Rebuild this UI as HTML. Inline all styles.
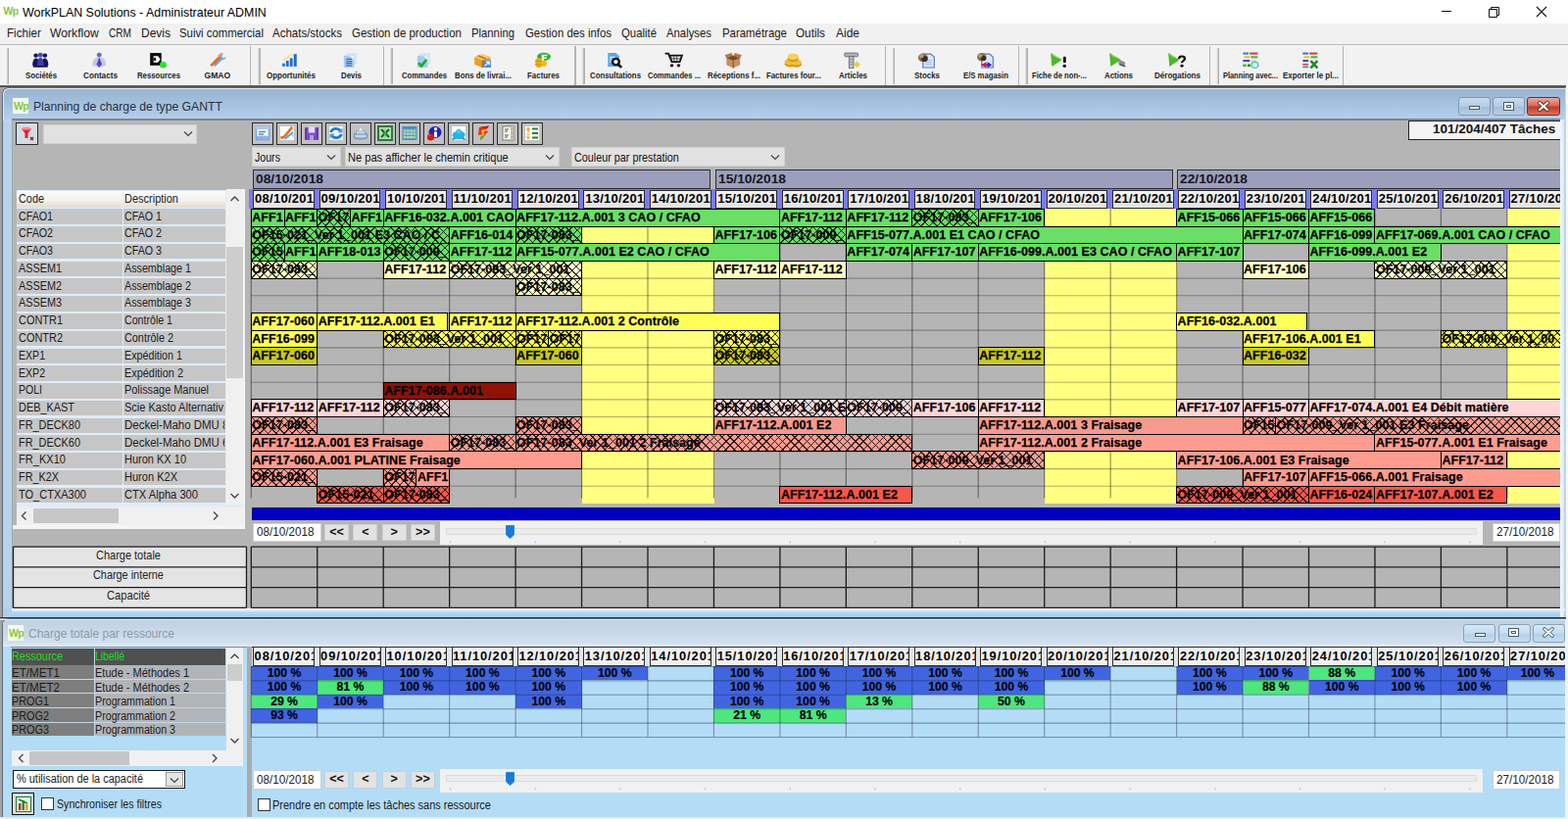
<!DOCTYPE html>
<html lang="fr"><head><meta charset="utf-8"><title>WorkPLAN Solutions - Administrateur ADMIN</title>
<style>

html,body{margin:0;padding:0;background:#fff;overflow:hidden;}
#root{position:relative;width:1600px;height:836px;overflow:hidden;background:#fff;font-family:"Liberation Sans",sans-serif;font-size:12px;color:#000;}
#root div{position:absolute;box-sizing:border-box;white-space:nowrap;}
#root svg{position:absolute;overflow:visible;}
.t{line-height:1;}
.bar{border:1px solid #000;overflow:hidden;font-weight:bold;font-size:12.5px;line-height:12.5px;padding-left:0.500px;padding-top:2.100px;letter-spacing:0.050px;-webkit-text-stroke:0.250px #000;}
.hx{background-image:repeating-linear-gradient(45deg,rgba(0,0,0,.8) 0,rgba(0,0,0,.8) 1.05px,transparent 1.05px,transparent 5.83px),repeating-linear-gradient(-45deg,rgba(0,0,0,.8) 0,rgba(0,0,0,.8) 1.05px,transparent 1.05px,transparent 5.83px);}
.dh{border:1.200px solid #2a2a2a;background:linear-gradient(#f4f4f4,#e2e2e2);font-weight:bold;font-size:13px;line-height:16px;overflow:hidden;padding-left:1px;letter-spacing:0.250px;}
.lc{background:#c6c6c6;font-size:12px;line-height:16px;overflow:hidden;color:#1a1a1a;}
.pc{font-weight:bold;font-size:12.2px;line-height:14.6px;text-align:center;color:#04040c;overflow:hidden;-webkit-text-stroke:0.200px #000;}
.btn{background:#e1e1e1;border:1px solid #adadad;}

</style></head><body>
<div id="root">
<div style="left:0px;top:0px;width:1600px;height:24px;background:#fff;"></div>
<div class="t" style="left:3.5px;top:6px;font-size:10.5px;font-weight:bold;color:#86c83c;letter-spacing:-0.6px;">Wp</div>
<div class="t" style="left:23px;top:5.5px;font-size:13.4px;transform:scaleX(0.927);transform-origin:0 0;">WorkPLAN Solutions - Administrateur ADMIN</div>
<svg style="left:1470px;top:5px" width="120" height="16" viewBox="0 0 120 16"><path d="M1 6.5H11" stroke="#111" stroke-width="1" fill="none"/><path d="M49.5 4.5h8v8h-8z M51.5 4.5v-2h8v8h-2" stroke="#111" stroke-width="1" fill="none"/><path d="M98 2l10 10M108 2l-10 10" stroke="#111" stroke-width="1.1" fill="none"/></svg>
<div style="left:0px;top:24px;width:1600px;height:21px;background:#f1f1f1;"></div>
<div class="t" style="left:7px;top:28px;font-size:12.2px;color:#1a1a1a;transform:scaleX(0.956);transform-origin:0 0;">Fichier</div>
<div class="t" style="left:51px;top:28px;font-size:12.2px;color:#1a1a1a;">Workflow</div>
<div class="t" style="left:111px;top:28px;font-size:12.2px;color:#1a1a1a;transform:scaleX(0.828);transform-origin:0 0;">CRM</div>
<div class="t" style="left:144px;top:28px;font-size:12.2px;color:#1a1a1a;transform:scaleX(0.983);transform-origin:0 0;">Devis</div>
<div class="t" style="left:183px;top:28px;font-size:12.2px;color:#1a1a1a;transform:scaleX(0.933);transform-origin:0 0;">Suivi commercial</div>
<div class="t" style="left:278px;top:28px;font-size:12.2px;color:#1a1a1a;transform:scaleX(0.943);transform-origin:0 0;">Achats/stocks</div>
<div class="t" style="left:359px;top:28px;font-size:12.2px;color:#1a1a1a;transform:scaleX(0.938);transform-origin:0 0;">Gestion de production</div>
<div class="t" style="left:481px;top:28px;font-size:12.2px;color:#1a1a1a;transform:scaleX(0.927);transform-origin:0 0;">Planning</div>
<div class="t" style="left:536px;top:28px;font-size:12.2px;color:#1a1a1a;transform:scaleX(0.934);transform-origin:0 0;">Gestion des infos</div>
<div class="t" style="left:634px;top:28px;font-size:12.2px;color:#1a1a1a;transform:scaleX(0.931);transform-origin:0 0;">Qualité</div>
<div class="t" style="left:680px;top:28px;font-size:12.2px;color:#1a1a1a;transform:scaleX(0.929);transform-origin:0 0;">Analyses</div>
<div class="t" style="left:737px;top:28px;font-size:12.2px;color:#1a1a1a;transform:scaleX(0.936);transform-origin:0 0;">Paramétrage</div>
<div class="t" style="left:812px;top:28px;font-size:12.2px;color:#1a1a1a;transform:scaleX(0.962);transform-origin:0 0;">Outils</div>
<div class="t" style="left:853px;top:28px;font-size:12.2px;color:#1a1a1a;transform:scaleX(0.983);transform-origin:0 0;">Aide</div>
<div style="left:0px;top:45px;width:1600px;height:43px;background:#f2f2f2;border-top:1px solid #bcbcbc;"></div>
<div style="left:0px;top:87.3px;width:1598px;height:2.2px;background:linear-gradient(#8a8a8a,#4a4a4a 40%,#555 100%);"></div>
<div class="t" style="left:26px;top:72.8px;font-size:8.6px;font-weight:bold;color:#222;transform:scaleX(0.905);transform-origin:0 0;">Sociétés</div>
<div class="t" style="left:84.5px;top:72.8px;font-size:8.6px;font-weight:bold;color:#222;transform:scaleX(0.951);transform-origin:0 0;">Contacts</div>
<div class="t" style="left:140px;top:72.8px;font-size:8.6px;font-weight:bold;color:#222;transform:scaleX(0.902);transform-origin:0 0;">Ressources</div>
<div class="t" style="left:208.5px;top:72.8px;font-size:8.6px;font-weight:bold;color:#222;">GMAO</div>
<div class="t" style="left:272px;top:72.8px;font-size:8.6px;font-weight:bold;color:#222;transform:scaleX(0.926);transform-origin:0 0;">Opportunités</div>
<div class="t" style="left:347.5px;top:72.8px;font-size:8.6px;font-weight:bold;color:#222;transform:scaleX(0.915);transform-origin:0 0;">Devis</div>
<div class="t" style="left:410px;top:72.8px;font-size:8.6px;font-weight:bold;color:#222;transform:scaleX(0.891);transform-origin:0 0;">Commandes</div>
<div class="t" style="left:464px;top:72.8px;font-size:8.6px;font-weight:bold;color:#222;transform:scaleX(0.912);transform-origin:0 0;">Bons de livrai...</div>
<div class="t" style="left:537.5px;top:72.8px;font-size:8.6px;font-weight:bold;color:#222;transform:scaleX(0.921);transform-origin:0 0;">Factures</div>
<div class="t" style="left:602px;top:72.8px;font-size:8.6px;font-weight:bold;color:#222;transform:scaleX(0.907);transform-origin:0 0;">Consultations</div>
<div class="t" style="left:661px;top:72.8px;font-size:8.6px;font-weight:bold;color:#222;transform:scaleX(0.883);transform-origin:0 0;">Commandes ...</div>
<div class="t" style="left:722px;top:72.8px;font-size:8.6px;font-weight:bold;color:#222;transform:scaleX(0.919);transform-origin:0 0;">Réceptions f...</div>
<div class="t" style="left:782px;top:72.8px;font-size:8.6px;font-weight:bold;color:#222;transform:scaleX(0.908);transform-origin:0 0;">Factures four...</div>
<div class="t" style="left:855.5px;top:72.8px;font-size:8.6px;font-weight:bold;color:#222;transform:scaleX(0.919);transform-origin:0 0;">Articles</div>
<div class="t" style="left:933px;top:72.8px;font-size:8.6px;font-weight:bold;color:#222;transform:scaleX(0.922);transform-origin:0 0;">Stocks</div>
<div class="t" style="left:983px;top:72.8px;font-size:8.6px;font-weight:bold;color:#222;transform:scaleX(0.899);transform-origin:0 0;">E/S magasin</div>
<div class="t" style="left:1053px;top:72.8px;font-size:8.6px;font-weight:bold;color:#222;transform:scaleX(0.888);transform-origin:0 0;">Fiche de non-...</div>
<div class="t" style="left:1126.5px;top:72.8px;font-size:8.6px;font-weight:bold;color:#222;transform:scaleX(0.920);transform-origin:0 0;">Actions</div>
<div class="t" style="left:1177.5px;top:72.8px;font-size:8.6px;font-weight:bold;color:#222;transform:scaleX(0.937);transform-origin:0 0;">Dérogations</div>
<div class="t" style="left:1248px;top:72.8px;font-size:8.6px;font-weight:bold;color:#222;transform:scaleX(0.862);transform-origin:0 0;">Planning avec...</div>
<div class="t" style="left:1308.5px;top:72.8px;font-size:8.6px;font-weight:bold;color:#222;transform:scaleX(0.917);transform-origin:0 0;">Exporter le pl...</div>
<div style="left:254.8px;top:46.5px;width:1.2px;height:40px;background:#b4b4b4;"></div>
<div style="left:391px;top:46.5px;width:1.2px;height:40px;background:#b4b4b4;"></div>
<div style="left:586.4px;top:46.5px;width:1.2px;height:40px;background:#b4b4b4;"></div>
<div style="left:903.1px;top:46.5px;width:1.2px;height:40px;background:#b4b4b4;"></div>
<div style="left:1038.6px;top:46.5px;width:1.2px;height:40px;background:#b4b4b4;"></div>
<div style="left:1234.1px;top:46.5px;width:1.2px;height:40px;background:#b4b4b4;"></div>
<div style="left:1369.8px;top:46.5px;width:1.2px;height:40px;background:#b4b4b4;"></div>
<div style="left:5.6px;top:48.5px;width:3.7px;height:37px;background:linear-gradient(90deg,#fafafa 0,#e0e0e0 40%,#a8a8a8 75%,#b8b8b8);"></div>
<div style="left:262.2px;top:48.5px;width:3.7px;height:37px;background:linear-gradient(90deg,#fafafa 0,#e0e0e0 40%,#a8a8a8 75%,#b8b8b8);"></div>
<div style="left:397.2px;top:48.5px;width:3.7px;height:37px;background:linear-gradient(90deg,#fafafa 0,#e0e0e0 40%,#a8a8a8 75%,#b8b8b8);"></div>
<div style="left:593px;top:48.5px;width:3.7px;height:37px;background:linear-gradient(90deg,#fafafa 0,#e0e0e0 40%,#a8a8a8 75%,#b8b8b8);"></div>
<div style="left:909.7px;top:48.5px;width:3.7px;height:37px;background:linear-gradient(90deg,#fafafa 0,#e0e0e0 40%,#a8a8a8 75%,#b8b8b8);"></div>
<div style="left:1045.2px;top:48.5px;width:3.7px;height:37px;background:linear-gradient(90deg,#fafafa 0,#e0e0e0 40%,#a8a8a8 75%,#b8b8b8);"></div>
<div style="left:1240.7px;top:48.5px;width:3.7px;height:37px;background:linear-gradient(90deg,#fafafa 0,#e0e0e0 40%,#a8a8a8 75%,#b8b8b8);"></div>
<svg style="left:32px;top:52.500px" width="18.500" height="17" viewBox="0 0 16 16" preserveAspectRatio="none"><circle cx="4" cy="3.500" r="2" fill="#14145a"/><circle cx="12" cy="3.500" r="2" fill="#14145a"/><circle cx="8" cy="3" r="2.200" fill="#4a4ab8"/><path d="M1 13c0-5 1.500-7 3-7s2.500 1 2.500 3l-1 5zM15 13c0-5-1.500-7-3-7s-2.500 1-2.500 3l1 5z" fill="#14145a"/><path d="M5 14c0-6 1.500-8.500 3-8.500s3 2.500 3 8.500z" fill="#3c3cae"/><path d="M1.500 14h13" stroke="#0a0a3a" stroke-width="1.500"/></svg>
<svg style="left:92px;top:52.500px" width="18.500" height="17" viewBox="0 0 16 16" preserveAspectRatio="none"><path d="M2 13c0-5 2-8 6-8s6 3 6 8l-6 2z" fill="#c8c8e4"/><circle cx="8" cy="2.800" r="2.200" fill="#6a6ad0"/><path d="M8 5l2.500 7-2.500 3-2.500-3z" fill="#5656c8"/><path d="M8 6l1 5-1 2z" fill="#2a2a98"/></svg>
<svg style="left:152px;top:52.500px" width="18.500" height="17" viewBox="0 0 16 16" preserveAspectRatio="none"><rect x="1" y="1" width="10" height="12" fill="#0c0c0c"/><path d="M4 4h4l2 3-2 3h-4z" fill="#fff"/><rect x="4" y="5.500" width="2" height="3" fill="#0c0c0c"/><circle cx="12.500" cy="12.500" r="3" fill="#2ee02e"/></svg>
<svg style="left:212px;top:52.500px" width="18.500" height="17" viewBox="0 0 16 16" preserveAspectRatio="none"><path d="M13.500 1.500c-2 0-3.500 1.500-3 3.500l-6 7 2 2 6.500-6.500c2 .5 3-1 3-3l-2 1.500-1.500-1.500z" fill="#6aaee0"/><path d="M2 12.500l7.500-8.500 2 2-8 8z" fill="#e86a1e"/><path d="M9 4l4-3" stroke="#e8a070" stroke-width="1.500"/></svg>
<svg style="left:287px;top:52.500px" width="18.500" height="17" viewBox="0 0 16 16" preserveAspectRatio="none"><rect x="1" y="11" width="2.200" height="3" fill="#1e6ad0"/><rect x="4.200" y="8.500" width="2.400" height="5.500" fill="#1e6ad0"/><rect x="7.600" y="6" width="2.400" height="8" fill="#1e6ad0"/><rect x="11" y="2" width="2.600" height="12" fill="#1e6ad0"/><path d="M2 8l8-6" stroke="#f0e48a" stroke-width="1.500"/></svg>
<svg style="left:348px;top:52.500px" width="18.500" height="17" viewBox="0 0 16 16" preserveAspectRatio="none"><path d="M5 1h9v11h-9z" fill="#d4e6f6"/><path d="M2.500 3.500h9v11.500h-9z" fill="#a4cbee"/><path d="M4.500 7h5M4.500 9h5M4.500 11h5M4.500 13h5" stroke="#3a6ea8" stroke-width="1.100"/><path d="M7 3.500h4.500v4z" fill="#e8f2fc"/></svg>
<svg style="left:423px;top:52.500px" width="18.500" height="17" viewBox="0 0 16 16" preserveAspectRatio="none"><path d="M5 1h9v11h-9z" fill="#d4e6f6"/><path d="M2.500 3.500h9v11.500h-9z" fill="#a4cbee"/><path d="M7 3.500h4.500v4z" fill="#e8f2fc"/><path d="M3.500 10.500l2.500 3 4.500-6" stroke="#28a428" stroke-width="2.400" fill="none"/></svg>
<svg style="left:483px;top:52.500px" width="18.500" height="17" viewBox="0 0 16 16" preserveAspectRatio="none"><path d="M1 5l7-3 7 3v7l-7 3-7-3z" fill="#e8a028"/><path d="M1 5l7 3 7-3-7-3z" fill="#f8cc68"/><path d="M8 8v7" stroke="#a86a10" stroke-width="1"/><rect x="8.500" y="8" width="7" height="7" fill="#4a8ae0"/><path d="M10 13.500l4-4m-3 0h3v3" stroke="#fff" stroke-width="1.200" fill="none"/><path d="M4 3.500l7 3" stroke="#b87818" stroke-width="1.500"/></svg>
<svg style="left:544px;top:52.500px" width="18.500" height="17" viewBox="0 0 16 16" preserveAspectRatio="none"><ellipse cx="9.500" cy="4.500" rx="6" ry="3.800" fill="#2eb02e"/><path d="M7.500 2.500h5v1.600h-3v1h2.500v1.500h-2.500v2h-2z" fill="#fff"/><rect x="2" y="6" width="6" height="9" rx="2" fill="#f0b010"/><rect x="7" y="8" width="5" height="6" rx="2" fill="#e8c020"/><path d="M2 9h6M2 12h6" stroke="#c88a08" stroke-width="1"/></svg>
<svg style="left:618px;top:52.500px" width="18.500" height="17" viewBox="0 0 16 16" preserveAspectRatio="none"><path d="M2 1h7l3 3v10h-10z" fill="#5aa6ea"/><path d="M3.500 5h5M3.500 7h4M3.500 9h3" stroke="#dcecfc" stroke-width="1.100"/><circle cx="9" cy="9.500" r="3" fill="#e8f2fc" stroke="#0a0a0a" stroke-width="2"/><path d="M11 12l3 3" stroke="#0a0a0a" stroke-width="2.400"/></svg>
<svg style="left:678px;top:52.500px" width="18.500" height="17" viewBox="0 0 16 16" preserveAspectRatio="none"><path d="M0.500 1.500h3l3 8h7l2-6h-11" stroke="#111" stroke-width="1.600" fill="none"/><path d="M6 4v5M8.500 4v5M11 4v5M5 6.500h9" stroke="#333" stroke-width=".8"/><circle cx="6.500" cy="13" r="1.500" fill="#111"/><circle cx="12.500" cy="13" r="1.500" fill="#111"/></svg>
<svg style="left:739px;top:52.500px" width="18.500" height="17" viewBox="0 0 16 16" preserveAspectRatio="none"><path d="M2 6l6 2.500 6-2.500v6.500l-6 3-6-3z" fill="#c89060"/><path d="M8 8.500v7" stroke="#8a5a30" stroke-width="1"/><path d="M2 6l-1.500-3 6-2 1.500 3zM14 6l1.500-3-6-2-1.500 3z" fill="#b47a48"/><path d="M2 6l6-2.500 6 2.500-6 2.500z" fill="#7a4a28"/></svg>
<svg style="left:800px;top:52.500px" width="18.500" height="17" viewBox="0 0 16 16" preserveAspectRatio="none"><ellipse cx="5.500" cy="11.500" rx="5" ry="3" fill="#d89a18"/><ellipse cx="5.500" cy="9.500" rx="5" ry="3" fill="#f0c040"/><ellipse cx="11" cy="12" rx="4.500" ry="2.800" fill="#d89a18"/><ellipse cx="11" cy="10" rx="4.500" ry="2.800" fill="#f0c040"/><ellipse cx="8" cy="6.500" rx="5" ry="3" fill="#d89a18"/><ellipse cx="8" cy="4.500" rx="5" ry="3" fill="#f8d058"/></svg>
<svg style="left:860px;top:52.500px" width="18.500" height="17" viewBox="0 0 16 16" preserveAspectRatio="none"><rect x="1.500" y="1" width="12" height="3.500" rx="1" fill="#b0b0b8" stroke="#6a6a72" stroke-width=".8"/><rect x="5.500" y="4.500" width="4" height="11" fill="#c4c4cc" stroke="#6a6a72" stroke-width=".8"/><path d="M5.500 7h4M5.500 9.500h4M5.500 12h4" stroke="#8a8a92" stroke-width=".8"/><path d="M12.500 9l3 3-3 3-3-3z" fill="#e8d040"/></svg>
<svg style="left:936px;top:52.500px" width="18.500" height="17" viewBox="0 0 16 16" preserveAspectRatio="none"><path d="M5 2h7l3 3v10h-10z" fill="#dce8f8" stroke="#5a7ab0" stroke-width="1"/><path d="M7 8h6M7 10h6M7 12h6" stroke="#a8c0e0" stroke-width="1"/><circle cx="5" cy="5.500" r="4.200" fill="#8a7048"/><circle cx="6.500" cy="6.500" r="2.800" fill="#3a2e1e"/><circle cx="3.800" cy="4" r="1.800" fill="#b8a078"/></svg>
<svg style="left:996px;top:52.500px" width="18.500" height="17" viewBox="0 0 16 16" preserveAspectRatio="none"><path d="M5 2h7l3 3v10h-10z" fill="#dce8f8" stroke="#5a7ab0" stroke-width="1"/><circle cx="5" cy="5" r="4" fill="#8a7048"/><circle cx="6.500" cy="6" r="2.500" fill="#3a2e1e"/><circle cx="3.800" cy="3.800" r="1.700" fill="#b8a078"/><path d="M5 11.500h5v-2l4 3-4 3v-2h-5z" fill="#1a2ae0"/><path d="M9 9.500l-4 3 4 3v-2h1v-2h-1z" fill="#e01a2a"/></svg>
<svg style="left:1071px;top:52.500px" width="18.500" height="17" viewBox="0 0 16 16" preserveAspectRatio="none"><path d="M1 1l10 6.500-9 6.500z" fill="#4eb82a"/><path d="M1 1l10 6.500-7-3z" fill="#8ee06a"/><rect x="12" y="4.500" width="2.500" height="6" rx="1" fill="#111"/><circle cx="13.200" cy="13.500" r="1.500" fill="#111"/></svg>
<svg style="left:1131px;top:52.500px" width="18.500" height="17" viewBox="0 0 16 16" preserveAspectRatio="none"><path d="M1 1l10 6.500-9 6.500z" fill="#4eb82a"/><path d="M1 1l10 6.500-7-3z" fill="#8ee06a"/><path d="M9 7l6 3-1 4-5-2z" fill="#8a8a8a"/><path d="M10 12l5 2" stroke="#555" stroke-width="1.500"/></svg>
<svg style="left:1191px;top:52.500px" width="18.500" height="17" viewBox="0 0 16 16" preserveAspectRatio="none"><path d="M1 1l10 6.500-9 6.500z" fill="#4eb82a"/><path d="M1 1l10 6.500-7-3z" fill="#8ee06a"/><path d="M10.500 6.500c0-3 5-3 5 0 0 2-2.500 2-2.500 4" stroke="#111" stroke-width="2" fill="none"/><circle cx="13" cy="13.500" r="1.400" fill="#111"/></svg>
<svg style="left:1266px;top:52.500px" width="18.500" height="17" viewBox="0 0 16 16" preserveAspectRatio="none"><path d="M2 1.500h5" stroke="#3a7ae0" stroke-width="2"/><path d="M8 1.500h7" stroke="#e03a3a" stroke-width="2"/><path d="M3 5h5" stroke="#f0c020" stroke-width="2"/><path d="M9 5h6" stroke="#48b848" stroke-width="2"/><path d="M2 8.500h6" stroke="#3a4ad0" stroke-width="2"/><path d="M9 8.500h5" stroke="#d8d8d8" stroke-width="2"/><path d="M2 13h3" stroke="#48b848" stroke-width="2.500"/><path d="M6 13h2.500" stroke="#2a8a2a" stroke-width="2.500"/><circle cx="12.500" cy="12.500" r="3" fill="#d8f4ec" stroke="#48c0a0" stroke-width="1.200"/></svg>
<svg style="left:1327px;top:52.500px" width="18.500" height="17" viewBox="0 0 16 16" preserveAspectRatio="none"><path d="M2 1.500h5" stroke="#3a7ae0" stroke-width="2"/><path d="M8 1.500h7" stroke="#e03a3a" stroke-width="2"/><path d="M3 5h5" stroke="#f0c020" stroke-width="2"/><path d="M9 5h6" stroke="#48b848" stroke-width="2"/><path d="M2 8.500h5" stroke="#3a4ad0" stroke-width="2"/><path d="M2 12h5" stroke="#e03a3a" stroke-width="1.500"/><path d="M2 14.500h5" stroke="#3a7ae0" stroke-width="1.500"/><path d="M9 8.500l6 7M15 8.500l-6 7" stroke="#1e8a2e" stroke-width="2.400"/></svg>
<div style="left:0px;top:89px;width:1600px;height:747px;background:#a0a2a4;"></div>
<div style="left:2px;top:89px;width:1596px;height:542px;background:linear-gradient(#9db9d6 0,#a9c4df 10px,#c4d8ec 33px,#b9d1ea 34px);border:1px solid #5f6a76;border-right-color:#c8d8e8;border-radius:7px 0 0 0;"></div>
<div style="left:3px;top:90px;width:1594px;height:32px;background:linear-gradient(#98b4d2 0,#a4c0dc 45%,#b4d0ec 100%);border-radius:6px 0 0 0;border-top:1px solid #dfeaf5;border-left:1px solid #dfeaf5;"></div>
<div style="left:13px;top:100px;width:16px;height:16px;background:#f4f6f2;"></div>
<div class="t" style="left:14px;top:102.5px;font-size:10.5px;font-weight:bold;color:#86c83c;letter-spacing:-0.6px;">Wp</div>
<div class="t" style="left:34px;top:102.3px;font-size:13.4px;color:#25303f;transform:scaleX(0.909);transform-origin:0 0;">Planning de charge de type GANTT</div>
<div style="left:1488px;top:99px;width:33px;height:19px;background:linear-gradient(#c9dcee,#b4cbe3 50%,#a3bdd9 51%,#b8cfe6);border:1px solid #7f98b4;border-radius:3px;"></div>
<div style="left:1523px;top:99px;width:33px;height:19px;background:linear-gradient(#c9dcee,#b4cbe3 50%,#a3bdd9 51%,#b8cfe6);border:1px solid #7f98b4;border-radius:3px;"></div>
<div style="left:1558px;top:99px;width:34px;height:19px;background:linear-gradient(#e9a99e,#d56a58 45%,#c13b27 55%,#d8735c);border:1px solid #7a2a20;border-radius:3px;"></div>
<svg style="left:1488px;top:99px" width="104" height="19" viewBox="0 0 104 19"><rect x="11.5" y="9.5" width="10" height="3" fill="#fff" stroke="#4a5a6c" stroke-width="1"/><rect x="46.500" y="5.5" width="10" height="8" fill="#fff" stroke="#4a5a6c" stroke-width="1"/><rect x="49.5" y="8.5" width="4" height="2" fill="#fff" stroke="#4a5a6c" stroke-width="1"/><path d="M83 6l8 7M91 6l-8 7" stroke="#5a2a24" stroke-width="4" stroke-linecap="round" fill="none"/><path d="M83 6l8 7M91 6l-8 7" stroke="#fff" stroke-width="2.2" stroke-linecap="round" fill="none"/></svg>
<div style="left:12px;top:121px;width:1580px;height:501px;background:#b5b5b5;border-top:2px solid #7e8296;border-left:1px solid #a0a8b0;"></div>
<div style="left:16px;top:125px;width:23px;height:23px;background:#d2dce6;border:1.500px solid #2a2a2a;"></div>
<svg style="left:20px;top:129px" width="16" height="16" viewBox="0 0 16 16"><path d="M2 2.500c0-1.500 10-1.500 10 0l-3.500 4.500v5h-3v-5z" fill="#e0202c"/><ellipse cx="7" cy="2.500" rx="4.500" ry="1.200" fill="#ff8a8a"/><path d="M11 11l3 3m0-3l-3 3" stroke="#b01010" stroke-width="1.300"/></svg>
<div style="left:44px;top:127px;width:157px;height:20px;background:#e1e1e1;border:1px solid #d0d0d0;"></div>
<svg style="left:187px;top:133px" width="10" height="8" viewBox="0 0 10 8"><path d="M1 1.500l4 4 4-4" stroke="#444" stroke-width="1.200" fill="none"/></svg>
<div style="left:256.5px;top:124.5px;width:22px;height:23px;background:#c2c2c2;border:1.500px solid #2c2c2c;"></div>
<div style="left:281.5px;top:124.5px;width:22px;height:23px;background:#c2c2c2;border:1.500px solid #2c2c2c;"></div>
<div style="left:306.5px;top:124.5px;width:22px;height:23px;background:#c2c2c2;border:1.500px solid #2c2c2c;"></div>
<div style="left:331.5px;top:124.5px;width:22px;height:23px;background:#c2c2c2;border:1.500px solid #2c2c2c;"></div>
<div style="left:356.5px;top:124.5px;width:22px;height:23px;background:#c2c2c2;border:1.500px solid #2c2c2c;"></div>
<div style="left:381.5px;top:124.5px;width:22px;height:23px;background:#c2c2c2;border:1.500px solid #2c2c2c;"></div>
<div style="left:406.5px;top:124.5px;width:22px;height:23px;background:#c2c2c2;border:1.500px solid #2c2c2c;"></div>
<div style="left:431.5px;top:124.5px;width:22px;height:23px;background:#c2c2c2;border:1.500px solid #2c2c2c;"></div>
<div style="left:456.5px;top:124.5px;width:22px;height:23px;background:#c2c2c2;border:1.500px solid #2c2c2c;"></div>
<div style="left:481.5px;top:124.5px;width:22px;height:23px;background:#c2c2c2;border:1.500px solid #2c2c2c;"></div>
<div style="left:506.5px;top:124.5px;width:22px;height:23px;background:#c2c2c2;border:1.500px solid #2c2c2c;"></div>
<div style="left:531.5px;top:124.5px;width:22px;height:23px;background:#c2c2c2;border:1.500px solid #2c2c2c;"></div>
<svg style="left:257.5px;top:126px" width="20" height="20" viewBox="0 0 20 20"><rect x="3.5" y="3.5" width="13" height="13" fill="#f4f8fc" stroke="#7aa8e0" stroke-width="1.6"/><rect x="3" y="3" width="14" height="3" fill="#a8c8f0"/><path d="M6 8.500h7M6 11h5M6 13.500h8" stroke="#6a88b0" stroke-width="1.300"/><rect x="4" y="13" width="12" height="3" fill="#88b4e8"/></svg>
<svg style="left:282.5px;top:126px" width="20" height="20" viewBox="0 0 20 20"><rect x="3" y="3" width="14" height="14" fill="#fff"/><path d="M4.500 14.500c2 0 3-1 4.500-3l5.500-7" stroke="#e8701a" stroke-width="2.800" fill="none" stroke-linecap="round"/><path d="M7.500 16l8.500-7" stroke="#5aa0d8" stroke-width="1.800"/><path d="M14 12l3-1-1 3z" fill="#9ac4e8"/></svg>
<svg style="left:307.5px;top:126px" width="20" height="20" viewBox="0 0 20 20"><rect x="3" y="4" width="14" height="13" rx="1" fill="#8052c4"/><rect x="6.500" y="3.500" width="7" height="6" fill="#e4dcf4"/><path d="M3 4h3.500v8h7v-8h3.500v13h-14z" fill="#7a4ac0"/><rect x="8" y="12" width="4" height="5" fill="#b89ae0"/><path d="M4 5v11M16 5v11" stroke="#5a30a0" stroke-width="1.200"/></svg>
<svg style="left:332.5px;top:126px" width="20" height="20" viewBox="0 0 20 20"><rect x="3" y="3" width="14" height="14" fill="#f4f8fc"/><path d="M4.500 9c1.500-4 7-5 10-1.500" stroke="#2a78c8" stroke-width="2.800" fill="none"/><path d="M15.500 11c-1.500 4-7 5-10 1.500" stroke="#2a78c8" stroke-width="2.800" fill="none"/><path d="M16.500 4.500v5h-5zM3.500 15.500v-5h5z" fill="#5a9ad8"/></svg>
<svg style="left:357.5px;top:126px" width="20" height="20" viewBox="0 0 20 20"><path d="M3.500 10.500h13v4.500q-6.500 2.500-13 0z" fill="#9ab4d4" stroke="#6a86aa" stroke-width=".8"/><path d="M5.500 10.500v-3h9v3" fill="#c4d4e8" stroke="#8a9ebc" stroke-width=".8"/><path d="M8 7.500l2-3.500 2 3.500z" fill="#e8eef6"/><path d="M4.500 13h11" stroke="#e4ecf6" stroke-width="1.200"/></svg>
<svg style="left:382.5px;top:126px" width="20" height="20" viewBox="0 0 20 20"><rect x="3" y="3" width="14" height="14" fill="#b4e0b4" stroke="#2a7a3a" stroke-width="2"/><path d="M6 6l8 8M14 6l-8 8" stroke="#1e6a2e" stroke-width="2.400"/><path d="M10 5v10" stroke="#8ac88a" stroke-width="1"/></svg>
<svg style="left:407.5px;top:126px" width="20" height="20" viewBox="0 0 20 20"><rect x="3" y="3.500" width="14" height="13" fill="#6ab0b4"/><rect x="3" y="3.500" width="14" height="2" fill="#4a88c8"/><rect x="3" y="9.500" width="14" height="2.200" fill="#b8c4d0"/><path d="M6.500 5.500v4M10 5.500v4M13.500 5.500v4M6.500 11.700v4.800M10 11.700v4.800M13.500 11.700v4.800" stroke="#3a7a9a" stroke-width="1"/><rect x="3" y="3.500" width="14" height="13" fill="none" stroke="#4a90c0" stroke-width="1"/><path d="M4 7.500h12M4 14h12" stroke="#98d8b8" stroke-width="2"/></svg>
<svg style="left:432.5px;top:126px" width="20" height="20" viewBox="0 0 20 20"><ellipse cx="11" cy="9" rx="6.500" ry="6" fill="#1a22c4"/><circle cx="6.500" cy="14" r="3.600" fill="#d41a1a"/><circle cx="5" cy="12" r="1.500" fill="#e83a3a"/><rect x="10" y="8.500" width="3" height="5.500" fill="#fff"/><circle cx="11.500" cy="5.800" r="1.700" fill="#fff"/></svg>
<svg style="left:457.5px;top:126px" width="20" height="20" viewBox="0 0 20 20"><rect x="3" y="3" width="14" height="14" fill="#fff"/><path d="M3.500 12.500c0-3 2-4 3.500-4 .5-3 6-3 6.500 0 2 0 3.500 1.500 3 4l-2.500 3.500h-8z" fill="#2ab0e0"/><circle cx="10" cy="8" r="2.500" fill="#48c8f0"/><path d="M6 15l-2.500 1.500M14 15l2.500 1.500" stroke="#1a90c0" stroke-width="2"/></svg>
<svg style="left:482.5px;top:126px" width="20" height="20" viewBox="0 0 20 20"><path d="M6 4l10-1.500-4 5.500 3.500-.5-8 10 1.500-6-4 .5z" fill="#e8301a"/><path d="M8 7l5-1-3 4 2 0-4 5 1-4z" fill="#f8d020"/><path d="M7.500 13l3-.5-3.500 5z" fill="#38b838"/><path d="M6 4l10-1.500-2 2.500z" fill="#b81a10"/></svg>
<svg style="left:507.5px;top:126px" width="20" height="20" viewBox="0 0 20 20"><rect x="5" y="3" width="11" height="14" fill="#f8f8f0" stroke="#7a7a7a" stroke-width="1"/><rect x="13" y="3" width="3" height="14" fill="#c8c4b0"/><path d="M7 6h4M7 8h3M7 12h4M7 14h3" stroke="#555" stroke-width="1.100"/><path d="M14 6h1M14 10h1M14 14h1" stroke="#8a8060" stroke-width="1.200"/></svg>
<svg style="left:532.5px;top:126px" width="20" height="20" viewBox="0 0 20 20"><rect x="3" y="3" width="14" height="14" fill="#fffef4"/><path d="M10 5.500h6M10 10h6M10 14.500h6" stroke="#2a7a4a" stroke-width="2.200"/><path d="M6 3.500l2.500 3h-5zM6 16.500l2.500-3h-5z" fill="#f0a040"/><rect x="5" y="6.500" width="2" height="2" fill="#f0a040"/><circle cx="6" cy="11" r="1.700" fill="#f4c888"/></svg>
<div style="left:257px;top:150px;width:91px;height:20px;background:#e1e1e1;border:1px solid #cfcfcf;"></div>
<div class="t" style="left:260px;top:154.8px;font-size:12.2px;color:#111;transform:scaleX(0.871);transform-origin:0 0;">Jours</div>
<svg style="left:333px;top:157px" width="10" height="8" viewBox="0 0 10 8"><path d="M1 1.500l4 4 4-4" stroke="#444" stroke-width="1.200" fill="none"/></svg>
<div style="left:352px;top:150px;width:219px;height:20px;background:#e1e1e1;border:1px solid #cfcfcf;"></div>
<div class="t" style="left:355px;top:154.8px;font-size:12.2px;color:#111;transform:scaleX(0.910);transform-origin:0 0;">Ne pas afficher le chemin critique</div>
<svg style="left:556px;top:157px" width="10" height="8" viewBox="0 0 10 8"><path d="M1 1.500l4 4 4-4" stroke="#444" stroke-width="1.200" fill="none"/></svg>
<div style="left:583px;top:150px;width:218px;height:20px;background:#e1e1e1;border:1px solid #cfcfcf;"></div>
<div class="t" style="left:586px;top:154.8px;font-size:12.2px;color:#111;transform:scaleX(0.886);transform-origin:0 0;">Couleur par prestation</div>
<svg style="left:786px;top:157px" width="10" height="8" viewBox="0 0 10 8"><path d="M1 1.500l4 4 4-4" stroke="#444" stroke-width="1.200" fill="none"/></svg>
<div style="left:1437px;top:123px;width:155px;height:20px;background:#f4f4f4;border:1px solid #222;border-right:none;"></div>
<div class="t" style="left:1462px;top:125px;font-size:13.5px;font-weight:bold;color:#111;">101/204/407 Tâches</div>
<div style="left:13px;top:536px;width:237px;height:4px;background:#f4f4f4;"></div>
<div style="left:248px;top:193px;width:2px;height:347px;background:#f4f4f4;"></div>
<div style="left:17px;top:194px;width:231px;height:325px;background:#e0edf8;"></div>
<div style="left:17px;top:194.5px;width:108px;height:17px;background:linear-gradient(#fdfdfd,#f4f2ec 55%,#e2ddd0);"></div>
<div style="left:126px;top:194.5px;width:104px;height:17px;background:linear-gradient(#fdfdfd,#f4f2ec 55%,#e2ddd0);"></div>
<div class="t" style="left:19px;top:197px;font-size:12px;color:#222;transform:scaleX(0.906);transform-origin:0 0;">Code</div>
<div class="t" style="left:127px;top:197px;font-size:12px;color:#222;transform:scaleX(0.916);transform-origin:0 0;">Description</div>
<div class="lc" style="left:17px;top:213.40px;width:108px;height:15.500px;"></div>
<div class="lc" style="left:126px;top:213.40px;width:104px;height:15.500px;"></div>
<div class="t" style="left:19px;top:214.6px;font-size:12px;color:#1c1c1c;transform:scaleX(0.890);transform-origin:0 0;">CFAO1</div>
<div class="t" style="left:127px;top:214.6px;font-size:12px;color:#1c1c1c;transform:scaleX(0.890);transform-origin:0 0;">CFAO 1</div>
<div class="lc" style="left:17px;top:231.17px;width:108px;height:15.500px;"></div>
<div class="lc" style="left:126px;top:231.17px;width:104px;height:15.500px;"></div>
<div class="t" style="left:19px;top:232.37px;font-size:12px;color:#1c1c1c;transform:scaleX(0.890);transform-origin:0 0;">CFAO2</div>
<div class="t" style="left:127px;top:232.37px;font-size:12px;color:#1c1c1c;transform:scaleX(0.890);transform-origin:0 0;">CFAO 2</div>
<div class="lc" style="left:17px;top:248.94px;width:108px;height:15.500px;"></div>
<div class="lc" style="left:126px;top:248.94px;width:104px;height:15.500px;"></div>
<div class="t" style="left:19px;top:250.14px;font-size:12px;color:#1c1c1c;transform:scaleX(0.890);transform-origin:0 0;">CFAO3</div>
<div class="t" style="left:127px;top:250.14px;font-size:12px;color:#1c1c1c;transform:scaleX(0.890);transform-origin:0 0;">CFAO 3</div>
<div class="lc" style="left:17px;top:266.71px;width:108px;height:15.500px;"></div>
<div class="lc" style="left:126px;top:266.71px;width:104px;height:15.500px;"></div>
<div class="t" style="left:19px;top:267.91px;font-size:12px;color:#1c1c1c;transform:scaleX(0.904);transform-origin:0 0;">ASSEM1</div>
<div class="t" style="left:127px;top:267.91px;font-size:12px;color:#1c1c1c;transform:scaleX(0.894);transform-origin:0 0;">Assemblage 1</div>
<div class="lc" style="left:17px;top:284.48px;width:108px;height:15.500px;"></div>
<div class="lc" style="left:126px;top:284.48px;width:104px;height:15.500px;"></div>
<div class="t" style="left:19px;top:285.68px;font-size:12px;color:#1c1c1c;transform:scaleX(0.904);transform-origin:0 0;">ASSEM2</div>
<div class="t" style="left:127px;top:285.68px;font-size:12px;color:#1c1c1c;transform:scaleX(0.894);transform-origin:0 0;">Assemblage 2</div>
<div class="lc" style="left:17px;top:302.25px;width:108px;height:15.500px;"></div>
<div class="lc" style="left:126px;top:302.25px;width:104px;height:15.500px;"></div>
<div class="t" style="left:19px;top:303.45px;font-size:12px;color:#1c1c1c;transform:scaleX(0.904);transform-origin:0 0;">ASSEM3</div>
<div class="t" style="left:127px;top:303.45px;font-size:12px;color:#1c1c1c;transform:scaleX(0.894);transform-origin:0 0;">Assemblage 3</div>
<div class="lc" style="left:17px;top:320.02px;width:108px;height:15.500px;"></div>
<div class="lc" style="left:126px;top:320.02px;width:104px;height:15.500px;"></div>
<div class="t" style="left:19px;top:321.22px;font-size:12px;color:#1c1c1c;transform:scaleX(0.912);transform-origin:0 0;">CONTR1</div>
<div class="t" style="left:127px;top:321.22px;font-size:12px;color:#1c1c1c;transform:scaleX(0.885);transform-origin:0 0;">Contrôle 1</div>
<div class="lc" style="left:17px;top:337.79px;width:108px;height:15.500px;"></div>
<div class="lc" style="left:126px;top:337.79px;width:104px;height:15.500px;"></div>
<div class="t" style="left:19px;top:338.99px;font-size:12px;color:#1c1c1c;transform:scaleX(0.912);transform-origin:0 0;">CONTR2</div>
<div class="t" style="left:127px;top:338.99px;font-size:12px;color:#1c1c1c;transform:scaleX(0.903);transform-origin:0 0;">Contrôle 2</div>
<div class="lc" style="left:17px;top:355.56px;width:108px;height:15.500px;"></div>
<div class="lc" style="left:126px;top:355.56px;width:104px;height:15.500px;"></div>
<div class="t" style="left:19px;top:356.76px;font-size:12px;color:#1c1c1c;transform:scaleX(0.880);transform-origin:0 0;">EXP1</div>
<div class="t" style="left:127px;top:356.76px;font-size:12px;color:#1c1c1c;transform:scaleX(0.893);transform-origin:0 0;">Expédition 1</div>
<div class="lc" style="left:17px;top:373.33px;width:108px;height:15.500px;"></div>
<div class="lc" style="left:126px;top:373.33px;width:104px;height:15.500px;"></div>
<div class="t" style="left:19px;top:374.53px;font-size:12px;color:#1c1c1c;transform:scaleX(0.880);transform-origin:0 0;">EXP2</div>
<div class="t" style="left:127px;top:374.53px;font-size:12px;color:#1c1c1c;transform:scaleX(0.908);transform-origin:0 0;">Expédition 2</div>
<div class="lc" style="left:17px;top:391.10px;width:108px;height:15.500px;"></div>
<div class="lc" style="left:126px;top:391.10px;width:104px;height:15.500px;"></div>
<div class="t" style="left:19px;top:392.3px;font-size:12px;color:#1c1c1c;transform:scaleX(0.878);transform-origin:0 0;">POLI</div>
<div class="t" style="left:127px;top:392.3px;font-size:12px;color:#1c1c1c;transform:scaleX(0.908);transform-origin:0 0;">Polissage Manuel</div>
<div class="lc" style="left:17px;top:408.87px;width:108px;height:15.500px;"></div>
<div class="lc" style="left:126px;top:408.87px;width:104px;height:15.500px;"></div>
<div class="t" style="left:19px;top:410.07px;font-size:12px;color:#1c1c1c;transform:scaleX(0.909);transform-origin:0 0;">DEB_KAST</div>
<div class="t" style="left:127px;top:410.07px;font-size:12px;color:#1c1c1c;transform:scaleX(0.918);transform-origin:0 0;">Scie Kasto Alternativ</div>
<div class="lc" style="left:17px;top:426.64px;width:108px;height:15.500px;"></div>
<div class="lc" style="left:126px;top:426.64px;width:104px;height:15.500px;"></div>
<div class="t" style="left:19px;top:427.84px;font-size:12px;color:#1c1c1c;transform:scaleX(0.908);transform-origin:0 0;">FR_DECK80</div>
<div class="t" style="left:127px;top:427.84px;font-size:12px;color:#1c1c1c;transform:scaleX(0.956);transform-origin:0 0;max-width:107.2px;overflow:hidden;">Deckel-Maho DMU 8</div>
<div class="lc" style="left:17px;top:444.41px;width:108px;height:15.500px;"></div>
<div class="lc" style="left:126px;top:444.41px;width:104px;height:15.500px;"></div>
<div class="t" style="left:19px;top:445.61px;font-size:12px;color:#1c1c1c;transform:scaleX(0.908);transform-origin:0 0;">FR_DECK60</div>
<div class="t" style="left:127px;top:445.61px;font-size:12px;color:#1c1c1c;transform:scaleX(0.956);transform-origin:0 0;max-width:107.2px;overflow:hidden;">Deckel-Maho DMU 6</div>
<div class="lc" style="left:17px;top:462.18px;width:108px;height:15.500px;"></div>
<div class="lc" style="left:126px;top:462.18px;width:104px;height:15.500px;"></div>
<div class="t" style="left:19px;top:463.38px;font-size:12px;color:#1c1c1c;transform:scaleX(0.923);transform-origin:0 0;">FR_KX10</div>
<div class="t" style="left:127px;top:463.38px;font-size:12px;color:#1c1c1c;transform:scaleX(0.917);transform-origin:0 0;">Huron KX 10</div>
<div class="lc" style="left:17px;top:479.95px;width:108px;height:15.500px;"></div>
<div class="lc" style="left:126px;top:479.95px;width:104px;height:15.500px;"></div>
<div class="t" style="left:19px;top:481.15px;font-size:12px;color:#1c1c1c;transform:scaleX(0.904);transform-origin:0 0;">FR_K2X</div>
<div class="t" style="left:127px;top:481.15px;font-size:12px;color:#1c1c1c;transform:scaleX(0.920);transform-origin:0 0;">Huron K2X</div>
<div class="lc" style="left:17px;top:497.72px;width:108px;height:15.500px;"></div>
<div class="lc" style="left:126px;top:497.72px;width:104px;height:15.500px;"></div>
<div class="t" style="left:19px;top:498.92px;font-size:12px;color:#1c1c1c;transform:scaleX(0.918);transform-origin:0 0;">TO_CTXA300</div>
<div class="t" style="left:127px;top:498.92px;font-size:12px;color:#1c1c1c;transform:scaleX(0.929);transform-origin:0 0;">CTX Alpha 300</div>
<div style="left:231px;top:193px;width:17px;height:322px;background:#f0f0f0;"></div>
<div style="left:231px;top:251.5px;width:17px;height:134.5px;background:#cdcdcd;"></div>
<svg style="left:231px;top:193px" width="17" height="322" viewBox="0 0 17 322"><path d="M4.500 12l4-4 4 4" stroke="#444" stroke-width="1.300" fill="none"/><path d="M4.500 311l4 4 4-4" stroke="#444" stroke-width="1.300" fill="none"/></svg>
<div style="left:17px;top:518px;width:231px;height:17.5px;background:#f0f0f0;"></div>
<div style="left:34px;top:519px;width:87px;height:15px;background:#c6c6c6;"></div>
<svg style="left:14px;top:518px" width="217" height="17" viewBox="0 0 217 17"><path d="M12.500 4.500l-4 4 4 4" stroke="#444" stroke-width="1.300" fill="none"/><path d="M204 4.500l4 4-4 4" stroke="#444" stroke-width="1.300" fill="none"/></svg>
<div style="left:258px;top:173px;width:467px;height:19.5px;background:#9c9fbc;border:1px solid #2a2a3a;"></div>
<div class="t" style="left:260.5px;top:175.5px;font-size:13px;font-weight:bold;color:#16161e;transform:scaleX(1.060);transform-origin:0 0;">08/10/2018</div>
<div style="left:730px;top:173px;width:467px;height:19.5px;background:#9c9fbc;border:1px solid #2a2a3a;"></div>
<div class="t" style="left:732.5px;top:175.5px;font-size:13px;font-weight:bold;color:#16161e;transform:scaleX(1.060);transform-origin:0 0;">15/10/2018</div>
<div style="left:1201px;top:173px;width:391px;height:19.5px;background:#9c9fbc;border:1px solid #2a2a3a;border-right:none;"></div>
<div class="t" style="left:1203.5px;top:175.5px;font-size:13px;font-weight:bold;color:#16161e;transform:scaleX(1.060);transform-origin:0 0;">22/10/2018</div>
<div style="left:254.3px;top:193px;width:1337.7px;height:20.3px;background:#7a7aee;"></div>
<div class="dh" style="left:258.1px;top:193.800px;width:62.8px;height:19.500px;">08/10/2018</div>
<div class="dh" style="left:325.6px;top:193.800px;width:62.9px;height:19.500px;">09/10/2018</div>
<div class="dh" style="left:393.0px;top:193.800px;width:62.8px;height:19.500px;">10/10/2018</div>
<div class="dh" style="left:460.5px;top:193.800px;width:62.9px;height:19.500px;">11/10/2018</div>
<div class="dh" style="left:527.9px;top:193.800px;width:62.9px;height:19.500px;">12/10/2018</div>
<div class="dh" style="left:595.3px;top:193.800px;width:62.9px;height:19.500px;">13/10/2018</div>
<div class="dh" style="left:662.8px;top:193.800px;width:62.9px;height:19.500px;">14/10/2018</div>
<div class="dh" style="left:730.2px;top:193.800px;width:62.9px;height:19.500px;">15/10/2018</div>
<div class="dh" style="left:797.7px;top:193.800px;width:62.9px;height:19.500px;">16/10/2018</div>
<div class="dh" style="left:865.2px;top:193.800px;width:62.8px;height:19.500px;">17/10/2018</div>
<div class="dh" style="left:932.6px;top:193.800px;width:62.9px;height:19.500px;">18/10/2018</div>
<div class="dh" style="left:1000.0px;top:193.800px;width:62.9px;height:19.500px;">19/10/2018</div>
<div class="dh" style="left:1067.5px;top:193.800px;width:62.9px;height:19.500px;">20/10/2018</div>
<div class="dh" style="left:1135.0px;top:193.800px;width:62.9px;height:19.500px;">21/10/2018</div>
<div class="dh" style="left:1202.4px;top:193.800px;width:62.8px;height:19.500px;">22/10/2018</div>
<div class="dh" style="left:1269.8px;top:193.800px;width:62.9px;height:19.500px;">23/10/2018</div>
<div class="dh" style="left:1337.3px;top:193.800px;width:62.9px;height:19.500px;">24/10/2018</div>
<div class="dh" style="left:1404.8px;top:193.800px;width:62.9px;height:19.500px;">25/10/2018</div>
<div class="dh" style="left:1472.2px;top:193.800px;width:62.8px;height:19.500px;">26/10/2018</div>
<div class="dh" style="left:1539.6px;top:193.800px;width:52.4px;height:19.500px;border-right:none;">27/10/2018</div>
<div style="left:593.5px;top:213px;width:135px;height:300.5px;background:#ffff80;"></div>
<div style="left:1065.5px;top:213px;width:135px;height:300.5px;background:#ffff80;"></div>
<div style="left:1538px;top:213px;width:54px;height:300.5px;background:#ffff80;"></div>
<svg style="left:254px;top:213px" width="1338" height="301" viewBox="0 0 1338 301"><path d="M2.30 0V295.5" stroke="rgba(0,0,0,.42)" stroke-width="1.2"/><path d="M69.75 0V295.5" stroke="rgba(0,0,0,.42)" stroke-width="1.2"/><path d="M137.20 0V295.5" stroke="rgba(0,0,0,.42)" stroke-width="1.2"/><path d="M204.65 0V295.5" stroke="rgba(0,0,0,.42)" stroke-width="1.2"/><path d="M272.10 0V295.5" stroke="rgba(0,0,0,.42)" stroke-width="1.2"/><path d="M339.55 0V295.5" stroke="rgba(0,0,0,.42)" stroke-width="1.2"/><path d="M407.00 0V295.5" stroke="rgba(0,0,0,.42)" stroke-width="1.2"/><path d="M474.45 0V295.5" stroke="rgba(0,0,0,.42)" stroke-width="1.2"/><path d="M541.90 0V295.5" stroke="rgba(0,0,0,.42)" stroke-width="1.2"/><path d="M609.35 0V295.5" stroke="rgba(0,0,0,.42)" stroke-width="1.2"/><path d="M676.80 0V295.5" stroke="rgba(0,0,0,.42)" stroke-width="1.2"/><path d="M744.25 0V295.5" stroke="rgba(0,0,0,.42)" stroke-width="1.2"/><path d="M811.70 0V295.5" stroke="rgba(0,0,0,.42)" stroke-width="1.2"/><path d="M879.15 0V295.5" stroke="rgba(0,0,0,.42)" stroke-width="1.2"/><path d="M946.60 0V295.5" stroke="rgba(0,0,0,.42)" stroke-width="1.2"/><path d="M1014.05 0V295.5" stroke="rgba(0,0,0,.42)" stroke-width="1.2"/><path d="M1081.50 0V295.5" stroke="rgba(0,0,0,.42)" stroke-width="1.2"/><path d="M1148.95 0V295.5" stroke="rgba(0,0,0,.42)" stroke-width="1.2"/><path d="M1216.40 0V295.5" stroke="rgba(0,0,0,.42)" stroke-width="1.2"/><path d="M1283.85 0V295.5" stroke="rgba(0,0,0,.42)" stroke-width="1.2"/><path d="M2 18.08H1338" stroke="rgba(0,0,0,.3)" stroke-width="1.1"/><path d="M2 35.76H1338" stroke="rgba(0,0,0,.3)" stroke-width="1.1"/><path d="M2 53.44H1338" stroke="rgba(0,0,0,.3)" stroke-width="1.1"/><path d="M2 71.12H1338" stroke="rgba(0,0,0,.3)" stroke-width="1.1"/><path d="M2 88.80H1338" stroke="rgba(0,0,0,.3)" stroke-width="1.1"/><path d="M2 106.48H1338" stroke="rgba(0,0,0,.3)" stroke-width="1.1"/><path d="M2 124.16H1338" stroke="rgba(0,0,0,.3)" stroke-width="1.1"/><path d="M2 141.84H1338" stroke="rgba(0,0,0,.3)" stroke-width="1.1"/><path d="M2 159.52H1338" stroke="rgba(0,0,0,.3)" stroke-width="1.1"/><path d="M2 177.20H1338" stroke="rgba(0,0,0,.3)" stroke-width="1.1"/><path d="M2 194.88H1338" stroke="rgba(0,0,0,.3)" stroke-width="1.1"/><path d="M2 212.56H1338" stroke="rgba(0,0,0,.3)" stroke-width="1.1"/><path d="M2 230.24H1338" stroke="rgba(0,0,0,.3)" stroke-width="1.1"/><path d="M2 247.92H1338" stroke="rgba(0,0,0,.3)" stroke-width="1.1"/><path d="M2 265.60H1338" stroke="rgba(0,0,0,.3)" stroke-width="1.1"/><path d="M2 283.28H1338" stroke="rgba(0,0,0,.3)" stroke-width="1.1"/></svg>
<div class="bar" style="left:255.80px;top:212.90px;width:34.73px;height:18.68px;background-color:#6ade66;">AFF1</div>
<div class="bar" style="left:289.53px;top:212.90px;width:34.72px;height:18.68px;background-color:#6ade66;">AFF1</div>
<div class="bar hx" style="left:323.25px;top:212.90px;width:34.73px;height:18.68px;background-color:#6ade66;">OF17</div>
<div class="bar" style="left:356.98px;top:212.90px;width:34.73px;height:18.68px;background-color:#6ade66;">AFF1</div>
<div class="bar" style="left:390.70px;top:212.90px;width:135.90px;height:18.68px;background-color:#6ade66;">AFF16-032.A.001 CAO</div>
<div class="bar" style="left:525.60px;top:212.90px;width:270.80px;height:18.68px;background-color:#6ade66;">AFF17-112.A.001 3 CAO / CFAO</div>
<div class="bar" style="left:795.40px;top:212.90px;width:68.45px;height:18.68px;background-color:#6ade66;">AFF17-112</div>
<div class="bar" style="left:862.85px;top:212.90px;width:68.45px;height:18.68px;background-color:#6ade66;">AFF17-112</div>
<div class="bar hx" style="left:930.30px;top:212.90px;width:68.45px;height:18.68px;background-color:#6ade66;">OF17-083_</div>
<div class="bar" style="left:997.75px;top:212.90px;width:68.45px;height:18.68px;background-color:#6ade66;">AFF17-106</div>
<div class="bar" style="left:1200.10px;top:212.90px;width:68.45px;height:18.68px;background-color:#6ade66;">AFF15-066</div>
<div class="bar" style="left:1267.55px;top:212.90px;width:68.45px;height:18.68px;background-color:#6ade66;">AFF15-066</div>
<div class="bar" style="left:1335.00px;top:212.90px;width:68.45px;height:18.68px;background-color:#6ade66;">AFF15-066</div>
<div class="bar hx" style="left:255.80px;top:230.58px;width:203.35px;height:18.68px;background-color:#6ade66;">OF15-021_Ver 1_001 E3 CAO / C</div>
<div class="bar" style="left:458.15px;top:230.58px;width:68.45px;height:18.68px;background-color:#6ade66;">AFF16-014</div>
<div class="bar hx" style="left:525.60px;top:230.58px;width:68.45px;height:18.68px;background-color:#6ade66;">OF17-083_</div>
<div class="bar" style="left:727.95px;top:230.58px;width:68.45px;height:18.68px;background-color:#6ade66;">AFF17-106</div>
<div class="bar hx" style="left:795.40px;top:230.58px;width:68.45px;height:18.68px;background-color:#6ade66;">OF17-009_</div>
<div class="bar" style="left:862.85px;top:230.58px;width:405.70px;height:18.68px;background-color:#6ade66;">AFF15-077.A.001 E1 CAO / CFAO</div>
<div class="bar" style="left:1267.55px;top:230.58px;width:68.45px;height:18.68px;background-color:#6ade66;">AFF17-074</div>
<div class="bar" style="left:1335.00px;top:230.58px;width:68.45px;height:18.68px;background-color:#6ade66;">AFF16-099</div>
<div class="bar" style="left:1402.45px;top:230.58px;width:189.55px;height:18.68px;background-color:#6ade66;border-right:none;">AFF17-069.A.001 CAO / CFAO</div>
<div class="bar hx" style="left:255.80px;top:248.26px;width:34.73px;height:18.68px;background-color:#6ade66;">OF15</div>
<div class="bar" style="left:289.53px;top:248.26px;width:34.72px;height:18.68px;background-color:#6ade66;">AFF1</div>
<div class="bar" style="left:323.25px;top:248.26px;width:68.45px;height:18.68px;background-color:#6ade66;">AFF18-013</div>
<div class="bar hx" style="left:390.70px;top:248.26px;width:68.45px;height:18.68px;background-color:#6ade66;">OF17-009_</div>
<div class="bar" style="left:458.15px;top:248.26px;width:68.45px;height:18.68px;background-color:#6ade66;">AFF17-112</div>
<div class="bar" style="left:525.60px;top:248.26px;width:270.80px;height:18.68px;background-color:#6ade66;">AFF15-077.A.001 E2 CAO / CFAO</div>
<div class="bar" style="left:862.85px;top:248.26px;width:68.45px;height:18.68px;background-color:#6ade66;">AFF17-074</div>
<div class="bar" style="left:930.30px;top:248.26px;width:68.45px;height:18.68px;background-color:#6ade66;">AFF17-107</div>
<div class="bar" style="left:997.75px;top:248.26px;width:203.35px;height:18.68px;background-color:#6ade66;">AFF16-099.A.001 E3 CAO / CFAO</div>
<div class="bar" style="left:1200.10px;top:248.26px;width:68.45px;height:18.68px;background-color:#6ade66;">AFF17-107</div>
<div class="bar" style="left:1335.00px;top:248.26px;width:135.90px;height:18.68px;background-color:#6ade66;">AFF16-099.A.001 E2</div>
<div class="bar hx" style="left:255.80px;top:265.94px;width:68.45px;height:18.68px;background-color:#ffffc4;">OF17-083_</div>
<div class="bar" style="left:390.70px;top:265.94px;width:68.45px;height:18.68px;background-color:#ffffc4;">AFF17-112</div>
<div class="bar hx" style="left:458.15px;top:265.94px;width:135.90px;height:18.68px;background-color:#ffffc4;">OF17-083_Ver 1_001</div>
<div class="bar" style="left:727.95px;top:265.94px;width:68.45px;height:18.68px;background-color:#ffffc4;">AFF17-112</div>
<div class="bar" style="left:795.40px;top:265.94px;width:68.45px;height:18.68px;background-color:#ffffc4;">AFF17-112</div>
<div class="bar" style="left:1267.55px;top:265.94px;width:68.45px;height:18.68px;background-color:#ffffc4;">AFF17-106</div>
<div class="bar hx" style="left:1402.45px;top:265.94px;width:135.90px;height:18.68px;background-color:#ffffc4;">OF17-009_Ver 1_001</div>
<div class="bar hx" style="left:525.60px;top:283.62px;width:68.45px;height:18.68px;background-color:#ffffc4;">OF17-083_</div>
<div class="bar" style="left:255.80px;top:318.98px;width:68.45px;height:18.68px;background-color:#ffff58;">AFF17-060</div>
<div class="bar" style="left:323.25px;top:318.98px;width:133.88px;height:18.68px;background-color:#ffff58;">AFF17-112.A.001 E1</div>
<div class="bar" style="left:458.15px;top:318.98px;width:68.45px;height:18.68px;background-color:#ffff58;">AFF17-112</div>
<div class="bar" style="left:525.60px;top:318.98px;width:270.80px;height:18.68px;background-color:#ffff58;">AFF17-112.A.001 2 Contrôle</div>
<div class="bar" style="left:1200.10px;top:318.98px;width:133.88px;height:18.68px;background-color:#ffff58;">AFF16-032.A.001</div>
<div class="bar" style="left:255.80px;top:336.66px;width:68.45px;height:18.68px;background-color:#ffff58;">AFF16-099</div>
<div class="bar hx" style="left:390.70px;top:336.66px;width:135.90px;height:18.68px;background-color:#ffff58;">OF17-083_Ver 1_001</div>
<div class="bar hx" style="left:525.60px;top:336.66px;width:34.73px;height:18.68px;background-color:#ffff58;">OF17</div>
<div class="bar hx" style="left:559.33px;top:336.66px;width:34.72px;height:18.68px;background-color:#ffff58;">OF17</div>
<div class="bar hx" style="left:727.95px;top:336.66px;width:68.45px;height:18.68px;background-color:#ffff58;">OF17-083_</div>
<div class="bar" style="left:1267.55px;top:336.66px;width:135.90px;height:18.68px;background-color:#ffff58;">AFF17-106.A.001 E1</div>
<div class="bar hx" style="left:1469.90px;top:336.66px;width:122.10px;height:18.68px;background-color:#ffff58;border-right:none;">OF17-009_Ver 1_00</div>
<div class="bar" style="left:255.80px;top:354.34px;width:68.45px;height:18.68px;background-color:#c8c828;">AFF17-060</div>
<div class="bar" style="left:525.60px;top:354.34px;width:68.45px;height:18.68px;background-color:#c8c828;">AFF17-060</div>
<div class="bar hx" style="left:727.95px;top:354.34px;width:68.45px;height:18.68px;background-color:#c8c828;">OF17-083_</div>
<div class="bar" style="left:997.75px;top:354.34px;width:68.45px;height:18.68px;background-color:#c8c828;">AFF17-112</div>
<div class="bar" style="left:1267.55px;top:354.34px;width:68.45px;height:18.68px;background-color:#c8c828;">AFF16-032</div>
<div class="bar" style="left:390.70px;top:389.70px;width:135.90px;height:18.68px;background-color:#8e1206;">AFF17-086.A.001</div>
<div class="bar" style="left:255.80px;top:407.38px;width:68.45px;height:18.68px;background-color:#ffd6d6;">AFF17-112</div>
<div class="bar" style="left:323.25px;top:407.38px;width:68.45px;height:18.68px;background-color:#ffd6d6;">AFF17-112</div>
<div class="bar hx" style="left:390.70px;top:407.38px;width:68.45px;height:18.68px;background-color:#ffd6d6;">OF17-083_</div>
<div class="bar hx" style="left:727.95px;top:407.38px;width:135.90px;height:18.68px;background-color:#ffd6d6;">OF17-083_Ver 1_001 E</div>
<div class="bar hx" style="left:862.85px;top:407.38px;width:68.45px;height:18.68px;background-color:#ffd6d6;">OF17-009_</div>
<div class="bar" style="left:930.30px;top:407.38px;width:68.45px;height:18.68px;background-color:#ffd6d6;">AFF17-106</div>
<div class="bar" style="left:997.75px;top:407.38px;width:68.45px;height:18.68px;background-color:#ffd6d6;">AFF17-112</div>
<div class="bar" style="left:1200.10px;top:407.38px;width:68.45px;height:18.68px;background-color:#ffd6d6;">AFF17-107</div>
<div class="bar" style="left:1267.55px;top:407.38px;width:68.45px;height:18.68px;background-color:#ffd6d6;">AFF15-077</div>
<div class="bar" style="left:1335.00px;top:407.38px;width:257.00px;height:18.68px;background-color:#ffd6d6;border-right:none;">AFF17-074.A.001 E4 Débit matière</div>
<div class="bar hx" style="left:255.80px;top:425.06px;width:68.45px;height:18.68px;background-color:#f59a8c;">OF17-083_</div>
<div class="bar hx" style="left:525.60px;top:425.06px;width:68.45px;height:18.68px;background-color:#f59a8c;">OF17-083_</div>
<div class="bar" style="left:727.95px;top:425.06px;width:135.90px;height:18.68px;background-color:#f59a8c;">AFF17-112.A.001 E2</div>
<div class="bar" style="left:997.75px;top:425.06px;width:270.80px;height:18.68px;background-color:#f59a8c;">AFF17-112.A.001 3 Fraisage</div>
<div class="bar hx" style="left:1267.55px;top:425.06px;width:34.73px;height:18.68px;background-color:#f59a8c;">OF15</div>
<div class="bar hx" style="left:1301.28px;top:425.06px;width:290.72px;height:18.68px;background-color:#f59a8c;border-right:none;">OF17-009_Ver 1_001 E3 Fraisage</div>
<div class="bar" style="left:255.80px;top:442.74px;width:203.35px;height:18.68px;background-color:#ff9c90;">AFF17-112.A.001 E3 Fraisage</div>
<div class="bar hx" style="left:458.15px;top:442.74px;width:68.45px;height:18.68px;background-color:#ff9c90;">OF17-083_</div>
<div class="bar hx" style="left:525.60px;top:442.74px;width:405.70px;height:18.68px;background-color:#ff9c90;">OF17-083_Ver 1_001 2 Fraisage</div>
<div class="bar" style="left:997.75px;top:442.74px;width:405.70px;height:18.68px;background-color:#ff9c90;">AFF17-112.A.001 2 Fraisage</div>
<div class="bar" style="left:1402.45px;top:442.74px;width:189.55px;height:18.68px;background-color:#ff9c90;border-right:none;">AFF15-077.A.001 E1 Fraisage</div>
<div class="bar" style="left:255.80px;top:460.42px;width:338.25px;height:18.68px;background-color:#ff9c90;">AFF17-060.A.001 PLATINE Fraisage</div>
<div class="bar hx" style="left:930.30px;top:460.42px;width:135.90px;height:18.68px;background-color:#ff9c90;">OF17-009_Ver 1_001</div>
<div class="bar" style="left:1200.10px;top:460.42px;width:270.80px;height:18.68px;background-color:#ff9c90;">AFF17-106.A.001 E3 Fraisage</div>
<div class="bar" style="left:1469.90px;top:460.42px;width:68.45px;height:18.68px;background-color:#ff9c90;">AFF17-112</div>
<div class="bar hx" style="left:255.80px;top:478.10px;width:68.45px;height:18.68px;background-color:#ff9c90;">OF15-021_</div>
<div class="bar hx" style="left:390.70px;top:478.10px;width:34.72px;height:18.68px;background-color:#ff9c90;">OF17</div>
<div class="bar" style="left:424.43px;top:478.10px;width:34.73px;height:18.68px;background-color:#ff9c90;">AFF1</div>
<div class="bar" style="left:1267.55px;top:478.10px;width:68.45px;height:18.68px;background-color:#ff9c90;">AFF17-107</div>
<div class="bar" style="left:1335.00px;top:478.10px;width:257.00px;height:18.68px;background-color:#ff9c90;border-right:none;">AFF15-066.A.001 Fraisage</div>
<div class="bar hx" style="left:323.25px;top:495.78px;width:68.45px;height:18.68px;background-color:#f8584a;">OF15-021_</div>
<div class="bar hx" style="left:390.70px;top:495.78px;width:68.45px;height:18.68px;background-color:#f8584a;">OF17-083_</div>
<div class="bar" style="left:795.40px;top:495.78px;width:135.90px;height:18.68px;background-color:#f8584a;">AFF17-112.A.001 E2</div>
<div class="bar hx" style="left:1200.10px;top:495.78px;width:135.90px;height:18.68px;background-color:#f8584a;">OF17-009_Ver 1_001</div>
<div class="bar" style="left:1335.00px;top:495.78px;width:68.45px;height:18.68px;background-color:#f8584a;">AFF16-024</div>
<div class="bar" style="left:1402.45px;top:495.78px;width:135.90px;height:18.68px;background-color:#f8584a;">AFF17-107.A.001 E2</div>
<div style="left:256.5px;top:517.5px;width:1335.5px;height:13.5px;background:#0000c0;border:1px solid #000090;border-right:none;"></div>
<div style="left:4px;top:621.3px;width:1593px;height:8.4px;background:linear-gradient(#f0f5fa 0,#e4eef8 22%,#b8d4ee 45%,#a6d4f4 70%,#a2d2f4);"></div>
<div style="left:4px;top:621.3px;width:8px;height:8.4px;background:#b4cce6;"></div>
<div style="left:257.5px;top:533.5px;width:70px;height:19.5px;background:#fff;border:1px solid #d0d0d0;"></div>
<div class="t" style="left:262px;top:537.3px;font-size:12px;color:#222;transform:scaleX(0.974);transform-origin:0 0;">08/10/2018</div>
<div style="left:331px;top:534.7px;width:25px;height:17.5px;background:#e3e3e3;border:1px solid #d0d0d0;"></div>
<div class="t" style="left:331px;top:536.8px;font-size:12.5px;font-weight:bold;color:#111;width:25px;text-align:center;">&lt;&lt;</div>
<div style="left:360.3px;top:534.7px;width:25px;height:17.5px;background:#e3e3e3;border:1px solid #d0d0d0;"></div>
<div class="t" style="left:360.3px;top:536.8px;font-size:12.5px;font-weight:bold;color:#111;width:25px;text-align:center;">&lt;</div>
<div style="left:389.6px;top:534.7px;width:25px;height:17.5px;background:#e3e3e3;border:1px solid #d0d0d0;"></div>
<div class="t" style="left:389.6px;top:536.8px;font-size:12.5px;font-weight:bold;color:#111;width:25px;text-align:center;">&gt;</div>
<div style="left:418.9px;top:534.7px;width:25px;height:17.5px;background:#e3e3e3;border:1px solid #d0d0d0;"></div>
<div class="t" style="left:418.9px;top:536.8px;font-size:12.5px;font-weight:bold;color:#111;width:25px;text-align:center;">&gt;&gt;</div>
<div style="left:449px;top:532.2px;width:1064px;height:24px;background:#f1f1f1;"></div>
<div style="left:455px;top:538.5px;width:1052px;height:7px;background:#ebebeb;border:1px solid #dcdcdc;"></div>
<svg style="left:449px;top:551.5px" width="1064" height="3"><rect x="10.0" y="0" width="1" height="2.500" fill="#c0c0c0"/><rect x="96.7" y="0" width="1" height="2.500" fill="#c0c0c0"/><rect x="183.4" y="0" width="1" height="2.500" fill="#c0c0c0"/><rect x="270.1" y="0" width="1" height="2.500" fill="#c0c0c0"/><rect x="356.8" y="0" width="1" height="2.500" fill="#c0c0c0"/><rect x="443.5" y="0" width="1" height="2.500" fill="#c0c0c0"/><rect x="530.2" y="0" width="1" height="2.500" fill="#c0c0c0"/><rect x="616.9" y="0" width="1" height="2.500" fill="#c0c0c0"/><rect x="703.6" y="0" width="1" height="2.500" fill="#c0c0c0"/><rect x="790.3" y="0" width="1" height="2.500" fill="#c0c0c0"/><rect x="877.0" y="0" width="1" height="2.500" fill="#c0c0c0"/><rect x="963.7" y="0" width="1" height="2.500" fill="#c0c0c0"/><rect x="1050.4" y="0" width="1" height="2.500" fill="#c0c0c0"/></svg>
<svg style="left:515.500px;top:535.5px" width="9" height="14" viewBox="0 0 9 14"><path d="M0.500 0.500h8v9.500l-4 3.500-4-3.500z" fill="#1a7ad8" stroke="#2a84dc" stroke-width="1"/></svg>
<div style="left:1522.5px;top:533.5px;width:69.5px;height:19.5px;background:#fff;border:1px solid #d0d0d0;"></div>
<div class="t" style="left:1527px;top:537.3px;font-size:12px;color:#222;transform:scaleX(0.974);transform-origin:0 0;">27/10/2018</div>
<div style="left:13.5px;top:558.1px;width:238px;height:62.25px;background:#e4e4e4;"></div>
<div class="t" style="left:98px;top:560.7px;font-size:12.2px;color:#222;transform:scaleX(0.901);transform-origin:0 0;">Charge totale</div>
<div class="t" style="left:95px;top:581.45px;font-size:12.2px;color:#222;transform:scaleX(0.892);transform-origin:0 0;">Charge interne</div>
<div class="t" style="left:109px;top:602.2px;font-size:12.2px;color:#222;transform:scaleX(0.914);transform-origin:0 0;">Capacité</div>
<svg style="left:0px;top:550px" width="1592" height="72" viewBox="0 0 1592 72"><path d="M13.5 8.10H251.5M256.30 8.10H1592" stroke="#1c1c1c" stroke-width="1.3"/><path d="M13.5 28.85H251.5M256.30 28.85H1592" stroke="#1c1c1c" stroke-width="1.3"/><path d="M13.5 49.60H251.5M256.30 49.60H1592" stroke="#1c1c1c" stroke-width="1.3"/><path d="M13.5 70.35H251.5M256.30 70.35H1592" stroke="#1c1c1c" stroke-width="1.3"/><path d="M13.5 8.10V70.35M251.5 8.10V70.35" stroke="#1c1c1c" stroke-width="1.3"/><path d="M256.30 8.10V70.35" stroke="#1c1c1c" stroke-width="1.3"/><path d="M323.75 8.10V70.35" stroke="#1c1c1c" stroke-width="1.3"/><path d="M391.20 8.10V70.35" stroke="#1c1c1c" stroke-width="1.3"/><path d="M458.65 8.10V70.35" stroke="#1c1c1c" stroke-width="1.3"/><path d="M526.10 8.10V70.35" stroke="#1c1c1c" stroke-width="1.3"/><path d="M593.55 8.10V70.35" stroke="#1c1c1c" stroke-width="1.3"/><path d="M661.00 8.10V70.35" stroke="#1c1c1c" stroke-width="1.3"/><path d="M728.45 8.10V70.35" stroke="#1c1c1c" stroke-width="1.3"/><path d="M795.90 8.10V70.35" stroke="#1c1c1c" stroke-width="1.3"/><path d="M863.35 8.10V70.35" stroke="#1c1c1c" stroke-width="1.3"/><path d="M930.80 8.10V70.35" stroke="#1c1c1c" stroke-width="1.3"/><path d="M998.25 8.10V70.35" stroke="#1c1c1c" stroke-width="1.3"/><path d="M1065.70 8.10V70.35" stroke="#1c1c1c" stroke-width="1.3"/><path d="M1133.15 8.10V70.35" stroke="#1c1c1c" stroke-width="1.3"/><path d="M1200.60 8.10V70.35" stroke="#1c1c1c" stroke-width="1.3"/><path d="M1268.05 8.10V70.35" stroke="#1c1c1c" stroke-width="1.3"/><path d="M1335.50 8.10V70.35" stroke="#1c1c1c" stroke-width="1.3"/><path d="M1402.95 8.10V70.35" stroke="#1c1c1c" stroke-width="1.3"/><path d="M1470.40 8.10V70.35" stroke="#1c1c1c" stroke-width="1.3"/><path d="M1537.85 8.10V70.35" stroke="#1c1c1c" stroke-width="1.3"/></svg>
<div style="left:2px;top:631px;width:1597px;height:210px;background:#b3dcf6;border:1px solid #5f6a76;border-right-color:#c8d8e8;border-radius:7px 0 0 0;"></div>
<div style="left:3px;top:632px;width:1595px;height:28px;background:linear-gradient(#bfd0e2 0,#c6d6e6 30%,#d2e0ee 85%,#e2ecf4 100%);border-radius:6px 0 0 0;border-top:1px solid #e4eef6;"></div>
<div style="left:11px;top:659.5px;width:1589px;height:1.2px;background:#7e8a96;"></div>
<div style="left:0px;top:629.7px;width:1600px;height:1.7px;background:#1e3840;"></div>
<div style="left:0px;top:631.5px;width:1600px;height:1px;background:#dfeaf2;"></div>
<div style="left:8px;top:638px;width:16px;height:16px;background:#f6f8f4;"></div>
<div class="t" style="left:9px;top:640.5px;font-size:10.5px;font-weight:bold;color:#86c83c;letter-spacing:-0.6px;">Wp</div>
<div class="t" style="left:29px;top:640px;font-size:13.6px;color:#8d9aa6;transform:scaleX(0.884);transform-origin:0 0;">Charge totale par ressource</div>
<div style="left:1493px;top:637px;width:33px;height:18.5px;background:linear-gradient(#d6e8f6,#c4dcf0 50%,#b4d0e8 51%,#c4dcf0);border:1px solid #8aa0b6;border-radius:3px;"></div>
<div style="left:1528.5px;top:637px;width:33px;height:18.5px;background:linear-gradient(#d6e8f6,#c4dcf0 50%,#b4d0e8 51%,#c4dcf0);border:1px solid #8aa0b6;border-radius:3px;"></div>
<div style="left:1564px;top:637px;width:33px;height:18.5px;background:linear-gradient(#d6e8f6,#c4dcf0 50%,#b4d0e8 51%,#c4dcf0);border:1px solid #8aa0b6;border-radius:3px;"></div>
<svg style="left:1493px;top:635.500px" width="104" height="21" viewBox="0 0 104 21"><rect x="12.500" y="10.500" width="10" height="3" fill="#fff" stroke="#4a5a6c" stroke-width="1"/><rect x="46.500" y="5.500" width="10" height="8" fill="#fff" stroke="#4a5a6c" stroke-width="1"/><rect x="49.500" y="8.500" width="4" height="2" fill="#fff" stroke="#4a5a6c" stroke-width="1"/><path d="M83 6l8 7M91 6l-8 7" stroke="#4a5a6c" stroke-width="3.600" stroke-linecap="round" fill="none"/><path d="M83 6l8 7M91 6l-8 7" stroke="#fff" stroke-width="1.800" stroke-linecap="round" fill="none"/></svg>
<div style="left:12px;top:661px;width:237px;height:121px;background:#b3dcf6;"></div>
<div style="left:12px;top:662px;width:218px;height:89px;background:#c4d8e8;"></div>
<div style="left:12px;top:662px;width:84px;height:16.7px;background:#505050;"></div>
<div style="left:97px;top:662px;width:133px;height:16.7px;background:#505050;"></div>
<div class="t" style="left:12px;top:663.5px;font-size:12px;color:#22dd22;transform:scaleX(0.907);transform-origin:0 0;">Ressource</div>
<div class="t" style="left:97px;top:663.5px;font-size:12px;color:#22dd22;transform:scaleX(0.865);transform-origin:0 0;">Libellé</div>
<div style="left:12px;top:679.2px;width:84px;height:13.7px;background:#7e7e7e;"></div>
<div style="left:97px;top:679.2px;width:133px;height:13.7px;background:#b2b5b8;"></div>
<div class="t" style="left:12px;top:681px;font-size:12px;color:#1c1c1c;transform:scaleX(0.967);transform-origin:0 0;">ET/MET1</div>
<div class="t" style="left:97px;top:681px;font-size:12px;color:#1c1c1c;transform:scaleX(0.917);transform-origin:0 0;">Etude - Méthodes 1</div>
<div style="left:12px;top:693.8px;width:84px;height:13.7px;background:#7e7e7e;"></div>
<div style="left:97px;top:693.8px;width:133px;height:13.7px;background:#b2b5b8;"></div>
<div class="t" style="left:12px;top:695.6px;font-size:12px;color:#1c1c1c;transform:scaleX(0.967);transform-origin:0 0;">ET/MET2</div>
<div class="t" style="left:97px;top:695.6px;font-size:12px;color:#1c1c1c;transform:scaleX(0.917);transform-origin:0 0;">Etude - Méthodes 2</div>
<div style="left:12px;top:708.4px;width:84px;height:13.7px;background:#7e7e7e;"></div>
<div style="left:97px;top:708.4px;width:133px;height:13.7px;background:#b2b5b8;"></div>
<div class="t" style="left:12px;top:710.2px;font-size:12px;color:#1c1c1c;transform:scaleX(0.904);transform-origin:0 0;">PROG1</div>
<div class="t" style="left:97px;top:710.2px;font-size:12px;color:#1c1c1c;transform:scaleX(0.891);transform-origin:0 0;">Programmation 1</div>
<div style="left:12px;top:723px;width:84px;height:13.7px;background:#7e7e7e;"></div>
<div style="left:97px;top:723px;width:133px;height:13.7px;background:#b2b5b8;"></div>
<div class="t" style="left:12px;top:724.8px;font-size:12px;color:#1c1c1c;transform:scaleX(0.904);transform-origin:0 0;">PROG2</div>
<div class="t" style="left:97px;top:724.8px;font-size:12px;color:#1c1c1c;transform:scaleX(0.891);transform-origin:0 0;">Programmation 2</div>
<div style="left:12px;top:737.6px;width:84px;height:13.7px;background:#7e7e7e;"></div>
<div style="left:97px;top:737.6px;width:133px;height:13.7px;background:#b2b5b8;"></div>
<div class="t" style="left:12px;top:739.4px;font-size:12px;color:#1c1c1c;transform:scaleX(0.904);transform-origin:0 0;">PROG3</div>
<div class="t" style="left:97px;top:739.4px;font-size:12px;color:#1c1c1c;transform:scaleX(0.891);transform-origin:0 0;">Programmation 3</div>
<div style="left:231px;top:661px;width:17px;height:105px;background:#f0f0f0;"></div>
<div style="left:232px;top:678px;width:15px;height:17px;background:#cdcdcd;"></div>
<svg style="left:231px;top:661px" width="17" height="105" viewBox="0 0 17 105"><path d="M4.500 11l4-4 4 4" stroke="#444" stroke-width="1.300" fill="none"/><path d="M4.500 93l4 4 4-4" stroke="#444" stroke-width="1.300" fill="none"/></svg>
<div style="left:12px;top:766px;width:219px;height:16px;background:#f0f0f0;"></div>
<div style="left:30px;top:767px;width:102px;height:14px;background:#c6c6c6;"></div>
<div style="left:231px;top:766px;width:17px;height:16px;background:#f0f0f0;"></div>
<svg style="left:12px;top:766px" width="219" height="16" viewBox="0 0 219 16"><path d="M11.500 4l-4 4 4 4" stroke="#444" stroke-width="1.300" fill="none"/><path d="M205 4l4 4-4 4" stroke="#444" stroke-width="1.300" fill="none"/></svg>
<div style="left:13px;top:786px;width:176px;height:19px;background:#fff;border:1px solid #1a1a1a;"></div>
<div class="t" style="left:17px;top:788.5px;font-size:12px;color:#222;transform:scaleX(0.912);transform-origin:0 0;">% utilisation de la capacité</div>
<div style="left:169px;top:788px;width:18px;height:15px;background:#e4e4e4;border:1px solid #9a9a9a;"></div>
<svg style="left:173px;top:793px" width="10" height="8" viewBox="0 0 10 8"><path d="M1 1.500l4 4 4-4" stroke="#444" stroke-width="1.200" fill="none"/></svg>
<div style="left:12px;top:809px;width:23px;height:23px;background:#dcdcdc;border:1px solid #111;"></div>
<svg style="left:16px;top:813px" width="16" height="16" viewBox="0 0 16 16"><rect x="0.500" y="0.500" width="15" height="15" fill="#e8f4e8" stroke="#1e7a3a"/><rect x="3" y="7" width="2.500" height="7" fill="#d03020"/><rect x="6.500" y="4" width="2.500" height="10" fill="#2a8a3a"/><rect x="10" y="8" width="2.500" height="6" fill="#e8a020"/><path d="M3 3l9 4" stroke="#1e7a3a" stroke-width="1.500"/></svg>
<div style="left:42px;top:814px;width:13px;height:13px;background:#fff;border:1px solid #333;"></div>
<div class="t" style="left:58px;top:814.5px;font-size:12px;color:#1a1a1a;transform:scaleX(0.886);transform-origin:0 0;">Synchroniser les filtres</div>
<div style="left:248px;top:661px;width:4.5px;height:175px;background:#b6def8;"></div>
<div style="left:252.4px;top:660px;width:4.2px;height:176px;background:#a8acb0;"></div>
<div style="left:256.6px;top:659.8px;width:1340px;height:20.3px;background:#dde6ee;border-top:1.200px solid #3a3a3a;"></div>
<div class="dh" style="left:258.1px;top:660px;width:63.0px;height:20px;border:1.300px solid #2a2a2a;background:#f0f0f0;font-size:12.8px;letter-spacing:0.950px;line-height:17px;padding-left:0.500px;">08/10/2018</div>
<div class="dh" style="left:325.6px;top:660px;width:63.1px;height:20px;border:1.300px solid #2a2a2a;background:#f0f0f0;font-size:12.8px;letter-spacing:0.950px;line-height:17px;padding-left:0.500px;">09/10/2018</div>
<div class="dh" style="left:393.0px;top:660px;width:63.0px;height:20px;border:1.300px solid #2a2a2a;background:#f0f0f0;font-size:12.8px;letter-spacing:0.950px;line-height:17px;padding-left:0.500px;">10/10/2018</div>
<div class="dh" style="left:460.5px;top:660px;width:63.0px;height:20px;border:1.300px solid #2a2a2a;background:#f0f0f0;font-size:12.8px;letter-spacing:0.950px;line-height:17px;padding-left:0.500px;">11/10/2018</div>
<div class="dh" style="left:527.9px;top:660px;width:63.0px;height:20px;border:1.300px solid #2a2a2a;background:#f0f0f0;font-size:12.8px;letter-spacing:0.950px;line-height:17px;padding-left:0.500px;">12/10/2018</div>
<div class="dh" style="left:595.3px;top:660px;width:63.1px;height:20px;border:1.300px solid #2a2a2a;background:#f0f0f0;font-size:12.8px;letter-spacing:0.950px;line-height:17px;padding-left:0.500px;">13/10/2018</div>
<div class="dh" style="left:662.8px;top:660px;width:63.1px;height:20px;border:1.300px solid #2a2a2a;background:#f0f0f0;font-size:12.8px;letter-spacing:0.950px;line-height:17px;padding-left:0.500px;">14/10/2018</div>
<div class="dh" style="left:730.2px;top:660px;width:63.1px;height:20px;border:1.300px solid #2a2a2a;background:#f0f0f0;font-size:12.8px;letter-spacing:0.950px;line-height:17px;padding-left:0.500px;">15/10/2018</div>
<div class="dh" style="left:797.7px;top:660px;width:63.1px;height:20px;border:1.300px solid #2a2a2a;background:#f0f0f0;font-size:12.8px;letter-spacing:0.950px;line-height:17px;padding-left:0.500px;">16/10/2018</div>
<div class="dh" style="left:865.2px;top:660px;width:63.0px;height:20px;border:1.300px solid #2a2a2a;background:#f0f0f0;font-size:12.8px;letter-spacing:0.950px;line-height:17px;padding-left:0.500px;">17/10/2018</div>
<div class="dh" style="left:932.6px;top:660px;width:63.1px;height:20px;border:1.300px solid #2a2a2a;background:#f0f0f0;font-size:12.8px;letter-spacing:0.950px;line-height:17px;padding-left:0.500px;">18/10/2018</div>
<div class="dh" style="left:1000.0px;top:660px;width:63.1px;height:20px;border:1.300px solid #2a2a2a;background:#f0f0f0;font-size:12.8px;letter-spacing:0.950px;line-height:17px;padding-left:0.500px;">19/10/2018</div>
<div class="dh" style="left:1067.5px;top:660px;width:63.1px;height:20px;border:1.300px solid #2a2a2a;background:#f0f0f0;font-size:12.8px;letter-spacing:0.950px;line-height:17px;padding-left:0.500px;">20/10/2018</div>
<div class="dh" style="left:1135.0px;top:660px;width:63.1px;height:20px;border:1.300px solid #2a2a2a;background:#f0f0f0;font-size:12.8px;letter-spacing:0.950px;line-height:17px;padding-left:0.500px;">21/10/2018</div>
<div class="dh" style="left:1202.4px;top:660px;width:63.0px;height:20px;border:1.300px solid #2a2a2a;background:#f0f0f0;font-size:12.8px;letter-spacing:0.950px;line-height:17px;padding-left:0.500px;">22/10/2018</div>
<div class="dh" style="left:1269.8px;top:660px;width:63.1px;height:20px;border:1.300px solid #2a2a2a;background:#f0f0f0;font-size:12.8px;letter-spacing:0.950px;line-height:17px;padding-left:0.500px;">23/10/2018</div>
<div class="dh" style="left:1337.3px;top:660px;width:63.1px;height:20px;border:1.300px solid #2a2a2a;background:#f0f0f0;font-size:12.8px;letter-spacing:0.950px;line-height:17px;padding-left:0.500px;">24/10/2018</div>
<div class="dh" style="left:1404.8px;top:660px;width:63.1px;height:20px;border:1.300px solid #2a2a2a;background:#f0f0f0;font-size:12.8px;letter-spacing:0.950px;line-height:17px;padding-left:0.500px;">25/10/2018</div>
<div class="dh" style="left:1472.2px;top:660px;width:63.0px;height:20px;border:1.300px solid #2a2a2a;background:#f0f0f0;font-size:12.8px;letter-spacing:0.950px;line-height:17px;padding-left:0.500px;">26/10/2018</div>
<div class="dh" style="left:1539.6px;top:660px;width:60.4px;height:20px;border:1.300px solid #2a2a2a;background:#f0f0f0;font-size:12.8px;letter-spacing:0.950px;line-height:17px;padding-left:0.500px;">27/10/2018</div>
<div class="pc" style="left:256.30px;top:680.00px;width:67.45px;height:14.00px;background:#4165e1;">100 %</div>
<div class="pc" style="left:323.75px;top:680.00px;width:67.45px;height:14.00px;background:#4165e1;">100 %</div>
<div class="pc" style="left:391.20px;top:680.00px;width:67.45px;height:14.00px;background:#4165e1;">100 %</div>
<div class="pc" style="left:458.65px;top:680.00px;width:67.45px;height:14.00px;background:#4165e1;">100 %</div>
<div class="pc" style="left:526.10px;top:680.00px;width:67.45px;height:14.00px;background:#4165e1;">100 %</div>
<div class="pc" style="left:593.55px;top:680.00px;width:67.45px;height:14.00px;background:#4165e1;">100 %</div>
<div class="pc" style="left:728.45px;top:680.00px;width:67.45px;height:14.00px;background:#4165e1;">100 %</div>
<div class="pc" style="left:795.90px;top:680.00px;width:67.45px;height:14.00px;background:#4165e1;">100 %</div>
<div class="pc" style="left:863.35px;top:680.00px;width:67.45px;height:14.00px;background:#4165e1;">100 %</div>
<div class="pc" style="left:930.80px;top:680.00px;width:67.45px;height:14.00px;background:#4165e1;">100 %</div>
<div class="pc" style="left:998.25px;top:680.00px;width:67.45px;height:14.00px;background:#4165e1;">100 %</div>
<div class="pc" style="left:1065.70px;top:680.00px;width:67.45px;height:14.00px;background:#4165e1;">100 %</div>
<div class="pc" style="left:1200.60px;top:680.00px;width:67.45px;height:14.00px;background:#4165e1;">100 %</div>
<div class="pc" style="left:1268.05px;top:680.00px;width:67.45px;height:14.00px;background:#4165e1;">100 %</div>
<div class="pc" style="left:1335.50px;top:680.00px;width:67.45px;height:14.00px;background:#4ee67e;">88 %</div>
<div class="pc" style="left:1402.95px;top:680.00px;width:67.45px;height:14.00px;background:#4165e1;">100 %</div>
<div class="pc" style="left:1470.40px;top:680.00px;width:67.45px;height:14.00px;background:#4165e1;">100 %</div>
<div class="pc" style="left:1537.85px;top:680.00px;width:62.15px;height:14.00px;background:#4165e1;">100 %</div>
<div class="pc" style="left:256.30px;top:694.00px;width:67.45px;height:15.00px;background:#4165e1;">100 %</div>
<div class="pc" style="left:323.75px;top:694.00px;width:67.45px;height:15.00px;background:#4ee67e;">81 %</div>
<div class="pc" style="left:391.20px;top:694.00px;width:67.45px;height:15.00px;background:#4165e1;">100 %</div>
<div class="pc" style="left:458.65px;top:694.00px;width:67.45px;height:15.00px;background:#4165e1;">100 %</div>
<div class="pc" style="left:526.10px;top:694.00px;width:67.45px;height:15.00px;background:#4165e1;">100 %</div>
<div class="pc" style="left:728.45px;top:694.00px;width:67.45px;height:15.00px;background:#4165e1;">100 %</div>
<div class="pc" style="left:795.90px;top:694.00px;width:67.45px;height:15.00px;background:#4165e1;">100 %</div>
<div class="pc" style="left:863.35px;top:694.00px;width:67.45px;height:15.00px;background:#4165e1;">100 %</div>
<div class="pc" style="left:930.80px;top:694.00px;width:67.45px;height:15.00px;background:#4165e1;">100 %</div>
<div class="pc" style="left:998.25px;top:694.00px;width:67.45px;height:15.00px;background:#4165e1;">100 %</div>
<div class="pc" style="left:1200.60px;top:694.00px;width:67.45px;height:15.00px;background:#4165e1;">100 %</div>
<div class="pc" style="left:1268.05px;top:694.00px;width:67.45px;height:15.00px;background:#4ee67e;">88 %</div>
<div class="pc" style="left:1335.50px;top:694.00px;width:67.45px;height:15.00px;background:#4165e1;">100 %</div>
<div class="pc" style="left:1402.95px;top:694.00px;width:67.45px;height:15.00px;background:#4165e1;">100 %</div>
<div class="pc" style="left:1470.40px;top:694.00px;width:67.45px;height:15.00px;background:#4165e1;">100 %</div>
<div class="pc" style="left:256.30px;top:709.00px;width:67.45px;height:14.00px;background:#4ee67e;">29 %</div>
<div class="pc" style="left:323.75px;top:709.00px;width:67.45px;height:14.00px;background:#4165e1;">100 %</div>
<div class="pc" style="left:526.10px;top:709.00px;width:67.45px;height:14.00px;background:#4165e1;">100 %</div>
<div class="pc" style="left:728.45px;top:709.00px;width:67.45px;height:14.00px;background:#4165e1;">100 %</div>
<div class="pc" style="left:795.90px;top:709.00px;width:67.45px;height:14.00px;background:#4165e1;">100 %</div>
<div class="pc" style="left:863.35px;top:709.00px;width:67.45px;height:14.00px;background:#4ee67e;">13 %</div>
<div class="pc" style="left:998.25px;top:709.00px;width:67.45px;height:14.00px;background:#4ee67e;">50 %</div>
<div class="pc" style="left:256.30px;top:723.00px;width:67.45px;height:15.00px;background:#4165e1;">93 %</div>
<div class="pc" style="left:728.45px;top:723.00px;width:67.45px;height:15.00px;background:#4ee67e;">21 %</div>
<div class="pc" style="left:795.90px;top:723.00px;width:67.45px;height:15.00px;background:#4ee67e;">81 %</div>
<svg style="left:250px;top:679.60px" width="1350" height="73.00"><path d="M6.30 0V72.00" stroke="rgba(30,40,60,.42)" stroke-width="1.1"/><path d="M73.75 0V72.00" stroke="rgba(30,40,60,.42)" stroke-width="1.1"/><path d="M141.20 0V72.00" stroke="rgba(30,40,60,.42)" stroke-width="1.1"/><path d="M208.65 0V72.00" stroke="rgba(30,40,60,.42)" stroke-width="1.1"/><path d="M276.10 0V72.00" stroke="rgba(30,40,60,.42)" stroke-width="1.1"/><path d="M343.55 0V72.00" stroke="rgba(30,40,60,.42)" stroke-width="1.1"/><path d="M411.00 0V72.00" stroke="rgba(30,40,60,.42)" stroke-width="1.1"/><path d="M478.45 0V72.00" stroke="rgba(30,40,60,.42)" stroke-width="1.1"/><path d="M545.90 0V72.00" stroke="rgba(30,40,60,.42)" stroke-width="1.1"/><path d="M613.35 0V72.00" stroke="rgba(30,40,60,.42)" stroke-width="1.1"/><path d="M680.80 0V72.00" stroke="rgba(30,40,60,.42)" stroke-width="1.1"/><path d="M748.25 0V72.00" stroke="rgba(30,40,60,.42)" stroke-width="1.1"/><path d="M815.70 0V72.00" stroke="rgba(30,40,60,.42)" stroke-width="1.1"/><path d="M883.15 0V72.00" stroke="rgba(30,40,60,.42)" stroke-width="1.1"/><path d="M950.60 0V72.00" stroke="rgba(30,40,60,.42)" stroke-width="1.1"/><path d="M1018.05 0V72.00" stroke="rgba(30,40,60,.42)" stroke-width="1.1"/><path d="M1085.50 0V72.00" stroke="rgba(30,40,60,.42)" stroke-width="1.1"/><path d="M1152.95 0V72.00" stroke="rgba(30,40,60,.42)" stroke-width="1.1"/><path d="M1220.40 0V72.00" stroke="rgba(30,40,60,.42)" stroke-width="1.1"/><path d="M1287.85 0V72.00" stroke="rgba(30,40,60,.42)" stroke-width="1.1"/><path d="M1355.30 0V72.00" stroke="rgba(30,40,60,.42)" stroke-width="1.1"/><path d="M6.30 0.50H1350" stroke="rgba(30,40,60,.42)" stroke-width="1.1"/><path d="M6.30 14.90H1350" stroke="rgba(30,40,60,.42)" stroke-width="1.1"/><path d="M6.30 29.30H1350" stroke="rgba(30,40,60,.42)" stroke-width="1.1"/><path d="M6.30 43.70H1350" stroke="rgba(30,40,60,.42)" stroke-width="1.1"/><path d="M6.30 58.10H1350" stroke="rgba(30,40,60,.42)" stroke-width="1.1"/><path d="M6.30 72.50H1350" stroke="rgba(30,40,60,.42)" stroke-width="1.1"/></svg>
<div style="left:257.5px;top:786px;width:70px;height:19.5px;background:#fff;border:1px solid #c4d0dc;"></div>
<div class="t" style="left:262px;top:789.8px;font-size:12px;color:#222;transform:scaleX(0.974);transform-origin:0 0;">08/10/2018</div>
<div style="left:331px;top:787.2px;width:25px;height:17.5px;background:#e3e3e3;border:1px solid #c4d0dc;"></div>
<div class="t" style="left:331px;top:789.3px;font-size:12.5px;font-weight:bold;color:#111;width:25px;text-align:center;">&lt;&lt;</div>
<div style="left:360.3px;top:787.2px;width:25px;height:17.5px;background:#e3e3e3;border:1px solid #c4d0dc;"></div>
<div class="t" style="left:360.3px;top:789.3px;font-size:12.5px;font-weight:bold;color:#111;width:25px;text-align:center;">&lt;</div>
<div style="left:389.6px;top:787.2px;width:25px;height:17.5px;background:#e3e3e3;border:1px solid #c4d0dc;"></div>
<div class="t" style="left:389.6px;top:789.3px;font-size:12.5px;font-weight:bold;color:#111;width:25px;text-align:center;">&gt;</div>
<div style="left:418.9px;top:787.2px;width:25px;height:17.5px;background:#e3e3e3;border:1px solid #c4d0dc;"></div>
<div class="t" style="left:418.9px;top:789.3px;font-size:12.5px;font-weight:bold;color:#111;width:25px;text-align:center;">&gt;&gt;</div>
<div style="left:449px;top:784.7px;width:1064px;height:24px;background:#f1f1f1;"></div>
<div style="left:455px;top:791px;width:1052px;height:7px;background:#ebebeb;border:1px solid #dcdcdc;"></div>
<svg style="left:449px;top:804.0px" width="1064" height="3"><rect x="10.0" y="0" width="1" height="2.500" fill="#c0c0c0"/><rect x="96.7" y="0" width="1" height="2.500" fill="#c0c0c0"/><rect x="183.4" y="0" width="1" height="2.500" fill="#c0c0c0"/><rect x="270.1" y="0" width="1" height="2.500" fill="#c0c0c0"/><rect x="356.8" y="0" width="1" height="2.500" fill="#c0c0c0"/><rect x="443.5" y="0" width="1" height="2.500" fill="#c0c0c0"/><rect x="530.2" y="0" width="1" height="2.500" fill="#c0c0c0"/><rect x="616.9" y="0" width="1" height="2.500" fill="#c0c0c0"/><rect x="703.6" y="0" width="1" height="2.500" fill="#c0c0c0"/><rect x="790.3" y="0" width="1" height="2.500" fill="#c0c0c0"/><rect x="877.0" y="0" width="1" height="2.500" fill="#c0c0c0"/><rect x="963.7" y="0" width="1" height="2.500" fill="#c0c0c0"/><rect x="1050.4" y="0" width="1" height="2.500" fill="#c0c0c0"/></svg>
<svg style="left:515.500px;top:788.0px" width="9" height="14" viewBox="0 0 9 14"><path d="M0.500 0.500h8v9.500l-4 3.500-4-3.500z" fill="#1a7ad8" stroke="#2a84dc" stroke-width="1"/></svg>
<div style="left:1522.5px;top:786px;width:69.5px;height:19.5px;background:#fff;border:1px solid #c4d0dc;"></div>
<div class="t" style="left:1527px;top:789.8px;font-size:12px;color:#222;transform:scaleX(0.974);transform-origin:0 0;">27/10/2018</div>
<div style="left:262.5px;top:814.5px;width:13px;height:13px;background:#fff;border:1px solid #333;"></div>
<div class="t" style="left:278.3px;top:815.5px;font-size:12px;color:#1a1a1a;transform:scaleX(0.913);transform-origin:0 0;">Prendre en compte les tâches sans ressource</div>
<div style="left:0px;top:834px;width:1600px;height:2px;background:#e2edf6;"></div>
<div style="left:1592px;top:122px;width:3.5px;height:508px;background:linear-gradient(90deg,#f2f6fa,#dfe9f3);"></div>
<div style="left:1598px;top:87px;width:2px;height:749px;background:#f6f9fc;"></div>
<div style="left:1596.5px;top:633px;width:3.5px;height:203px;background:#eef4f9;"></div>
</div>
</body></html>
